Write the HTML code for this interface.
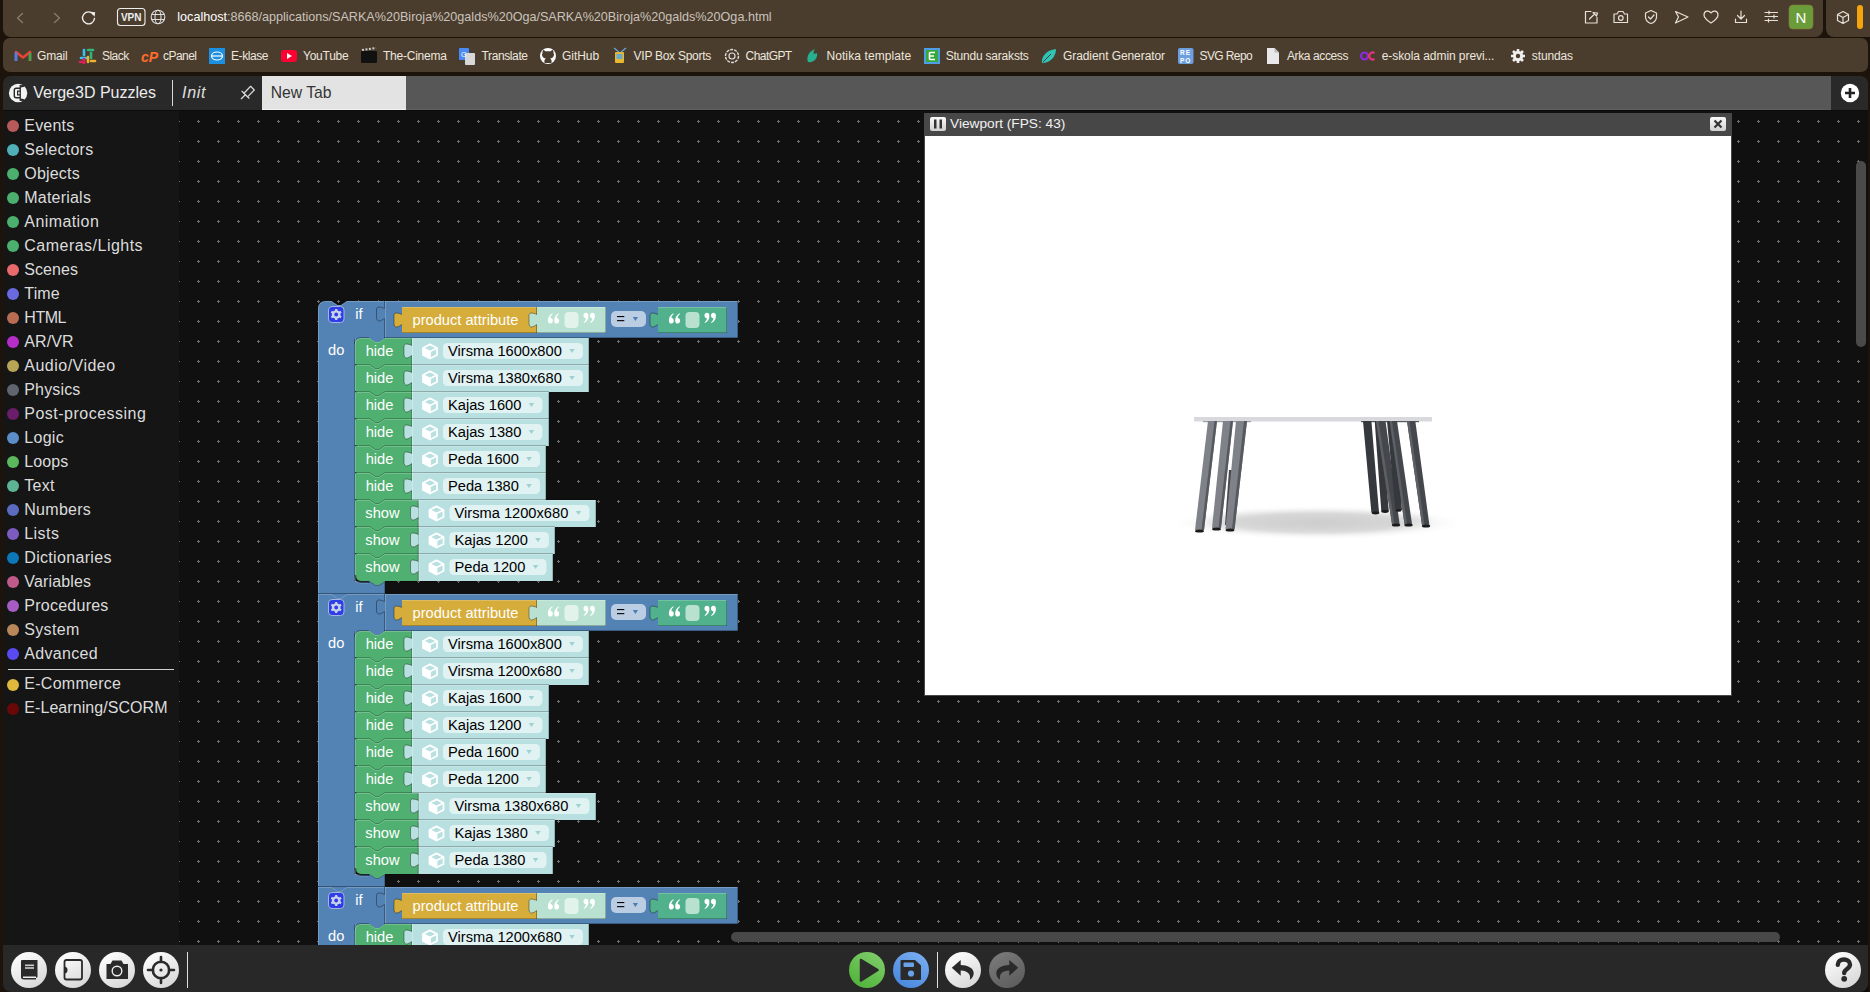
<!DOCTYPE html>
<html><head><meta charset="utf-8"><title>Verge3D Puzzles</title><style>
*{margin:0;padding:0;box-sizing:border-box}
html,body{width:1870px;height:992px;overflow:hidden;background:#1c140b;font-family:"Liberation Sans",sans-serif}
.a{position:absolute}
.t{white-space:nowrap}
svg{position:absolute;overflow:visible}
</style></head><body>

<div class="a" style="left:3px;top:-10px;width:1820px;height:47px;background:#4b3d2e;border-radius:0 0 8px 8px"></div>
<div class="a" style="left:1826px;top:-10px;width:60px;height:47px;background:#4b3d2e;border-radius:0 0 8px 8px"></div>
<div class="a" style="left:3px;top:38px;width:1865px;height:34px;background:#4b3d2e;border-radius:7px"></div>
<svg style="left:0;top:0" width="1870" height="37">
<g fill="none" stroke="#8a7e70" stroke-width="1.2" stroke-linecap="round" stroke-linejoin="round">
<path d="M22.5,13.5 L17.5,18 L22.5,22.5"/>
<path d="M54.5,13.5 L59.5,18 L54.5,22.5"/>
</g>
<g fill="none" stroke="#eee" stroke-width="1.4" stroke-linecap="round">
<path d="M93.5,14.5 A6,6 0 1 0 94.5,18.5"/>
</g>
<path d="M90.5,11.8 L95.2,12.2 L94.6,16.8 Z" fill="#eee"/>
<rect x="117.5" y="8.5" width="27.5" height="17" rx="3" fill="none" stroke="#eee" stroke-width="1.1"/>
<text x="131.2" y="21.2" font-family="Liberation Sans" font-weight="bold" font-size="10" fill="#eee" text-anchor="middle">VPN</text>
<g fill="none" stroke="#ddd" stroke-width="1.1">
<circle cx="158" cy="17" r="6.8"/>
<ellipse cx="158" cy="17" rx="3" ry="6.8"/>
<path d="M151.5,14.5 H164.5 M151.5,19.5 H164.5"/>
</g>
<g fill="none" stroke="#e6e0d8" stroke-width="1.2" stroke-linecap="round" stroke-linejoin="round">
<path d="M1591,11.5 H1585.5 V23 H1597 V17.5"/>
<path d="M1589.5,19 L1594.5,14 M1593,12.5 L1596.5,16 L1597.5,13 Z"/>
<path d="M1614,14 H1617 L1618.5,11.5 H1623 L1624.5,14 H1627.5 V22.5 H1614 Z"/>
<circle cx="1620.8" cy="18" r="2.3"/>
<path d="M1651,10.5 L1645.5,13 V17 C1645.5,20 1648,22.5 1651,23.5 C1654,22.5 1656.5,20 1656.5,17 V13 Z"/>
<path d="M1648.5,17 L1650.5,19 L1654,15"/>
<path d="M1675.5,11.5 L1688,17 L1675.5,23 L1678.5,17 Z"/>
<path d="M1711,13 C1709,10 1704,10.5 1704,15 C1704,18.5 1708,21 1711,23 C1714,21 1718,18.5 1718,15 C1718,10.5 1713,10 1711,13 Z"/>
<path d="M1741,11 V19 M1737.5,15.5 L1741,19 L1744.5,15.5 M1735.5,19 V22.5 H1746.5 V19"/>
<path d="M1765,12.5 H1777.5 M1765,16.5 H1777.5 M1765,20.5 H1777.5"/>
<path d="M1769,11 V14 M1774,15 V18 M1768.5,19 V22"/>
<path d="M1843,11.5 L1848.5,14.5 V20.5 L1843,23.5 L1837.5,20.5 V14.5 Z M1837.5,14.5 L1843,17.5 L1848.5,14.5 M1843,17.5 V23.5"/>
</g>
<rect x="1789" y="5" width="24" height="24" rx="4" fill="#6a9c3a" stroke="#8a7a3a" stroke-width="0.6"/>
<text x="1801" y="22.5" font-family="Liberation Sans" font-size="15" fill="#fff" text-anchor="middle">N</text>
<rect x="1857" y="5" width="6" height="24" rx="3" fill="#f5a50c"/>
</svg>
<div class="a t" style="left:177.3px;top:11.33px;font-size:12.6px;line-height:12.6px;color:#fff;"><span style="color:#fff">localhost</span><span style="color:#c9c3bb">:8668/applications/SARKA%20Biroja%20galds%20Oga/SARKA%20Biroja%20galds%20Oga.html</span></div>
<div class="a t" style="left:37px;top:49.84px;font-size:12px;line-height:12px;color:#ece6de;letter-spacing:-0.187px">Gmail</div>
<div class="a t" style="left:102px;top:49.84px;font-size:12px;line-height:12px;color:#ece6de;letter-spacing:-0.549px">Slack</div>
<div class="a t" style="left:163px;top:49.84px;font-size:12px;line-height:12px;color:#ece6de;letter-spacing:-0.549px">cPanel</div>
<div class="a t" style="left:231px;top:49.84px;font-size:12px;line-height:12px;color:#ece6de;letter-spacing:-0.431px">E-klase</div>
<div class="a t" style="left:303px;top:49.84px;font-size:12px;line-height:12px;color:#ece6de;letter-spacing:-0.237px">YouTube</div>
<div class="a t" style="left:383px;top:49.84px;font-size:12px;line-height:12px;color:#ece6de;letter-spacing:-0.232px">The-Cinema</div>
<div class="a t" style="left:481.6px;top:49.84px;font-size:12px;line-height:12px;color:#ece6de;letter-spacing:-0.397px">Translate</div>
<div class="a t" style="left:562px;top:49.84px;font-size:12px;line-height:12px;color:#ece6de;letter-spacing:-0.058px">GitHub</div>
<div class="a t" style="left:633.6px;top:49.84px;font-size:12px;line-height:12px;color:#ece6de;letter-spacing:-0.268px">VIP Box Sports</div>
<div class="a t" style="left:745.6px;top:49.84px;font-size:12px;line-height:12px;color:#ece6de;letter-spacing:-0.574px">ChatGPT</div>
<div class="a t" style="left:826.4px;top:49.84px;font-size:12px;line-height:12px;color:#ece6de;letter-spacing:0.102px">Notika template</div>
<div class="a t" style="left:945.7px;top:49.84px;font-size:12px;line-height:12px;color:#ece6de;letter-spacing:-0.210px">Stundu saraksts</div>
<div class="a t" style="left:1063px;top:49.84px;font-size:12px;line-height:12px;color:#ece6de;letter-spacing:-0.077px">Gradient Generator</div>
<div class="a t" style="left:1199.6px;top:49.84px;font-size:12px;line-height:12px;color:#ece6de;letter-spacing:-0.620px">SVG Repo</div>
<div class="a t" style="left:1287px;top:49.84px;font-size:12px;line-height:12px;color:#ece6de;letter-spacing:-0.396px">Arka access</div>
<div class="a t" style="left:1381.7px;top:49.84px;font-size:12px;line-height:12px;color:#ece6de;letter-spacing:-0.061px">e-skola admin previ...</div>
<div class="a t" style="left:1531.8px;top:49.84px;font-size:12px;line-height:12px;color:#ece6de;letter-spacing:-0.118px">stundas</div>
<svg style="left:0;top:38" width="1870" height="34">
<g transform="translate(0,-38)">
<path d="M16,61 V52 L23,57.5 L30,52 V61" fill="none" stroke="#ea4335" stroke-width="2.6" stroke-linejoin="round"/>
<path d="M16,52.3 V61" stroke="#4285f4" stroke-width="2.6"/>
<path d="M30,53 V61" stroke="#34a853" stroke-width="2.6"/>
<g stroke-width="2.6" stroke-linecap="round">
<path d="M84,50 V55" stroke="#36c5f0"/><path d="M81,58 H86" stroke="#36c5f0"/>
<path d="M88,50 H93" stroke="#2eb67d"/><path d="M91,53 V58" stroke="#2eb67d"/>
<path d="M88,62 V57" stroke="#ecb22e"/><path d="M91,61 H95" stroke="#ecb22e"/>
<path d="M84,62 H80" stroke="#e01e5a"/><path d="M84,59 V63" stroke="#e01e5a"/>
</g>
<text x="141" y="62" font-family="Liberation Sans" font-weight="bold" font-style="italic" font-size="14" fill="#ff6c2c">cP</text>
<rect x="209" y="48" width="16" height="16" fill="#1c8fe0"/>
<ellipse cx="217" cy="56" rx="5.5" ry="4" fill="none" stroke="#fff" stroke-width="1.2"/><path d="M211.5,56 H222.5" stroke="#fff" stroke-width="1.2"/>
<rect x="281" y="50" width="16" height="12" rx="3" fill="#ff0033"/><path d="M287,53 L292,56 L287,59 Z" fill="#fff"/>
<rect x="361" y="51" width="16" height="12" rx="1" fill="#111"/><path d="M362,50 L376,48" stroke="#ccc" stroke-width="2" stroke-dasharray="2,1.5"/>
<rect x="459" y="48" width="10" height="12" rx="1" fill="#4a8af4"/><rect x="465" y="53" width="10" height="12" rx="1" fill="#d8d8d8"/>
<text x="461" y="57" font-size="7" font-family="Liberation Sans" fill="#fff">G</text>
<circle cx="548" cy="56" r="8" fill="#fff"/><path d="M544.5,63 C544,60 545,59 546,58.5 C542,58 541.5,55 542.5,53 C542.5,52 542.5,51 543,50 C544,50 545,51 546,51.5 C547.3,51.2 548.7,51.2 550,51.5 C551,51 552,50 553,50 C553.5,51 553.5,52 553.5,53 C554.5,55 554,58 550,58.5 C551,59 552,60 551.5,63 Z" fill="#4b3d2e"/>
<rect x="615" y="52" width="9" height="11" rx="1" fill="#e8b830"/><rect x="616.5" y="54" width="6" height="5" fill="#6ac"/><path d="M614,48 L619,52 M626,48 L621,52" stroke="#6ad" stroke-width="1.2"/>
<circle cx="732" cy="56" r="6.5" fill="none" stroke="#ddd" stroke-width="1.4" stroke-dasharray="3,1"/>
<circle cx="732" cy="56" r="3" fill="none" stroke="#ddd" stroke-width="1.2"/>
<path d="M808,62 C806,57 809,51 815,49 C812,53 814,55 817,53 C818,58 814,63 808,62 Z" fill="#26b090"/>
<rect x="924" y="48" width="16" height="16" fill="#4e9de8"/><rect x="926" y="50" width="12" height="12" fill="#36a83a"/><path d="M929.5,52.5 H935 M929.5,56 H934 M929.5,59.5 H935 M929.5,52.5 V59.5" stroke="#fff" stroke-width="1.6"/>
<path d="M1042,63 C1041,57 1046,50 1056,49 C1056,57 1050,63 1042,63 Z" fill="#2ec4b6"/><path d="M1043,62 L1051,54" stroke="#4b3d2e" stroke-width="1"/>
<rect x="1178" y="48" width="15.5" height="16" rx="2" fill="#6d9fe0"/>
<text x="1180" y="55" font-size="6.5" font-family="Liberation Sans" font-weight="bold" fill="#fff" letter-spacing="1">RE</text>
<text x="1180" y="62.5" font-size="6.5" font-family="Liberation Sans" font-weight="bold" fill="#fff" letter-spacing="1">PO</text>
<path d="M1267,48 H1274.5 L1279,52.5 V64 H1267 Z" fill="#e8e8ea"/><path d="M1274.5,48 V52.5 H1279" fill="#bbb"/>
<path d="M1368,56 A3.5,3.5 0 1 0 1368,56.1" fill="none"/>
<circle cx="1364.5" cy="56" r="3.5" fill="none" stroke="#8a2be2" stroke-width="2.2"/>
<path d="M1374.5,53 A3.5,3.5 0 1 0 1374.5,59" fill="none" stroke="#e0357a" stroke-width="2.2"/>
<g transform="translate(1518,56)" fill="#eee">
<circle r="5.2"/><g stroke="#eee" stroke-width="2.6"><path d="M0,-7 V7 M-7,0 H7 M-5,-5 L5,5 M5,-5 L-5,5"/></g>
<circle r="2.2" fill="#4b3d2e"/>
</g>
</g></svg>
<div class="a" style="left:3px;top:76px;width:1865px;height:916px;background:#0b0b0b;border-radius:7px 7px 0 8px;overflow:hidden"></div>
<div class="a" style="left:3px;top:76px;width:1865px;height:34px;background:#292929;border-radius:7px 7px 0 0"></div>
<div class="a" style="left:262px;top:76px;width:144px;height:34px;background:#e3e3e3;border-bottom:1px solid #f4f4f4"></div>
<div class="a" style="left:406px;top:76px;width:1425px;height:34px;background:#575757;border-bottom:1px solid #5f5f5f"></div>
<div class="a t" style="left:33.2px;top:84.76px;font-size:16px;line-height:16px;color:#ececec;">Verge3D Puzzles</div>
<div class="a" style="left:172px;top:80px;width:1px;height:26px;background:#d8d8d8"></div>
<div class="a t" style="left:182px;top:84.76px;font-size:16px;line-height:16px;color:#e0e0e0;font-style:italic;letter-spacing:0.7px">Init</div>
<div class="a t" style="left:270.7px;top:85.01px;font-size:15.7px;line-height:15.7px;color:#333;">New Tab</div>
<svg style="left:0;top:76" width="1870" height="34"><g transform="translate(0,-76)">
<circle cx="18.1" cy="93" r="9.2" fill="#f2f2f2"/>
<rect x="19.6" y="85" width="1.3" height="16" fill="#292929"/>
<path d="M20.2,88.3 H16.2 Q14.3,88.3 14.3,90.3 V95.7 Q14.3,97.7 16.2,97.7 H20.2" fill="none" stroke="#292929" stroke-width="1.4"/>
<path d="M20.2,91.2 H17.6 V94.8 H20.2" fill="none" stroke="#292929" stroke-width="1.2"/>
<path d="M20.9,85 L24.5,85.2 L24.5,86.8 L20.9,87.6 Z" fill="#292929"/>
<path d="M20.9,101 L24.5,100.8 L24.5,99.2 L20.9,98.4 Z" fill="#292929"/>
<g fill="none" stroke="#d8d8d8" stroke-width="1.25" stroke-linejoin="round" stroke-linecap="round">
<path d="M242,91.3 L249,98.2"/>
<path d="M244,93.2 L250.6,86.3 L254.3,90 L247.8,96.6"/>
<path d="M245.3,94.7 L241.3,98.7"/>
</g>
<circle cx="1850" cy="93" r="9.2" fill="#fff"/>
<path d="M1850,88 V98 M1845,93 H1855" stroke="#222" stroke-width="2.6"/>
</g></svg>
<div class="a" style="left:3px;top:111px;width:176px;height:834px;background:#151515"></div>
<div class="a" style="left:7px;top:120.2px;width:12px;height:12px;border-radius:6px;background:#b85a5a"></div>
<div class="a t" style="left:24.3px;top:117.86px;font-size:16px;line-height:16px;color:#dcdcdc;letter-spacing:0.198px">Events</div>
<div class="a" style="left:7px;top:144.2px;width:12px;height:12px;border-radius:6px;background:#4fb0b8"></div>
<div class="a t" style="left:24.3px;top:141.86px;font-size:16px;line-height:16px;color:#dcdcdc;letter-spacing:0.278px">Selectors</div>
<div class="a" style="left:7px;top:168.2px;width:12px;height:12px;border-radius:6px;background:#4caf6e"></div>
<div class="a t" style="left:24.3px;top:165.86px;font-size:16px;line-height:16px;color:#dcdcdc;letter-spacing:0.194px">Objects</div>
<div class="a" style="left:7px;top:192.2px;width:12px;height:12px;border-radius:6px;background:#4caf6e"></div>
<div class="a t" style="left:24.3px;top:189.86px;font-size:16px;line-height:16px;color:#dcdcdc;letter-spacing:0.210px">Materials</div>
<div class="a" style="left:7px;top:216.2px;width:12px;height:12px;border-radius:6px;background:#4caf6e"></div>
<div class="a t" style="left:24.3px;top:213.86px;font-size:16px;line-height:16px;color:#dcdcdc;letter-spacing:0.417px">Animation</div>
<div class="a" style="left:7px;top:240.2px;width:12px;height:12px;border-radius:6px;background:#4caf6e"></div>
<div class="a t" style="left:24.3px;top:237.86px;font-size:16px;line-height:16px;color:#dcdcdc;letter-spacing:0.482px">Cameras/Lights</div>
<div class="a" style="left:7px;top:264.2px;width:12px;height:12px;border-radius:6px;background:#e86a6a"></div>
<div class="a t" style="left:24.3px;top:261.86px;font-size:16px;line-height:16px;color:#dcdcdc;letter-spacing:0.072px">Scenes</div>
<div class="a" style="left:7px;top:288.2px;width:12px;height:12px;border-radius:6px;background:#6a6ae0"></div>
<div class="a t" style="left:24.3px;top:285.86px;font-size:16px;line-height:16px;color:#dcdcdc;letter-spacing:0.160px">Time</div>
<div class="a" style="left:7px;top:312.2px;width:12px;height:12px;border-radius:6px;background:#b86d52"></div>
<div class="a t" style="left:24.3px;top:309.86px;font-size:16px;line-height:16px;color:#dcdcdc;letter-spacing:-0.464px">HTML</div>
<div class="a" style="left:7px;top:336.2px;width:12px;height:12px;border-radius:6px;background:#b52ec8"></div>
<div class="a t" style="left:24.3px;top:333.86px;font-size:16px;line-height:16px;color:#dcdcdc;letter-spacing:0.060px">AR/VR</div>
<div class="a" style="left:7px;top:360.2px;width:12px;height:12px;border-radius:6px;background:#b8a455"></div>
<div class="a t" style="left:24.3px;top:357.86px;font-size:16px;line-height:16px;color:#dcdcdc;letter-spacing:0.482px">Audio/Video</div>
<div class="a" style="left:7px;top:384.2px;width:12px;height:12px;border-radius:6px;background:#60646e"></div>
<div class="a t" style="left:24.3px;top:381.86px;font-size:16px;line-height:16px;color:#dcdcdc;letter-spacing:0.154px">Physics</div>
<div class="a" style="left:7px;top:408.2px;width:12px;height:12px;border-radius:6px;background:#6a1e6a"></div>
<div class="a t" style="left:24.3px;top:405.86px;font-size:16px;line-height:16px;color:#dcdcdc;letter-spacing:0.492px">Post-processing</div>
<div class="a" style="left:7px;top:432.2px;width:12px;height:12px;border-radius:6px;background:#5b8ec8"></div>
<div class="a t" style="left:24.3px;top:429.86px;font-size:16px;line-height:16px;color:#dcdcdc;letter-spacing:0.270px">Logic</div>
<div class="a" style="left:7px;top:456.2px;width:12px;height:12px;border-radius:6px;background:#5cb85c"></div>
<div class="a t" style="left:24.3px;top:453.86px;font-size:16px;line-height:16px;color:#dcdcdc;letter-spacing:0.101px">Loops</div>
<div class="a" style="left:7px;top:480.2px;width:12px;height:12px;border-radius:6px;background:#5cb494"></div>
<div class="a t" style="left:24.3px;top:477.86px;font-size:16px;line-height:16px;color:#dcdcdc;letter-spacing:0.289px">Text</div>
<div class="a" style="left:7px;top:504.2px;width:12px;height:12px;border-radius:6px;background:#5b6cc0"></div>
<div class="a t" style="left:24.3px;top:501.86px;font-size:16px;line-height:16px;color:#dcdcdc;letter-spacing:0.270px">Numbers</div>
<div class="a" style="left:7px;top:528.2px;width:12px;height:12px;border-radius:6px;background:#7d5cc2"></div>
<div class="a t" style="left:24.3px;top:525.86px;font-size:16px;line-height:16px;color:#dcdcdc;letter-spacing:0.420px">Lists</div>
<div class="a" style="left:7px;top:552.2px;width:12px;height:12px;border-radius:6px;background:#0c78b8"></div>
<div class="a t" style="left:24.3px;top:549.86px;font-size:16px;line-height:16px;color:#dcdcdc;letter-spacing:0.318px">Dictionaries</div>
<div class="a" style="left:7px;top:576.2px;width:12px;height:12px;border-radius:6px;background:#c05a8a"></div>
<div class="a t" style="left:24.3px;top:573.86px;font-size:16px;line-height:16px;color:#dcdcdc;letter-spacing:0.143px">Variables</div>
<div class="a" style="left:7px;top:600.2px;width:12px;height:12px;border-radius:6px;background:#a65cc2"></div>
<div class="a t" style="left:24.3px;top:597.86px;font-size:16px;line-height:16px;color:#dcdcdc;letter-spacing:0.248px">Procedures</div>
<div class="a" style="left:7px;top:624.2px;width:12px;height:12px;border-radius:6px;background:#b8875a"></div>
<div class="a t" style="left:24.3px;top:621.86px;font-size:16px;line-height:16px;color:#dcdcdc;letter-spacing:0.326px">System</div>
<div class="a" style="left:7px;top:648.2px;width:12px;height:12px;border-radius:6px;background:#5a4af2"></div>
<div class="a t" style="left:24.3px;top:645.86px;font-size:16px;line-height:16px;color:#dcdcdc;letter-spacing:0.317px">Advanced</div>
<div class="a" style="left:8px;top:669px;width:166px;height:1px;background:#d0d0d0"></div>
<div class="a" style="left:7px;top:678.5px;width:12px;height:12px;border-radius:6px;background:#e0b83c"></div>
<div class="a t" style="left:24.3px;top:676.16px;font-size:16px;line-height:16px;color:#dcdcdc;letter-spacing:0.276px">E-Commerce</div>
<div class="a" style="left:7px;top:702.5px;width:12px;height:12px;border-radius:6px;background:#6a0808"></div>
<div class="a t" style="left:24.3px;top:700.16px;font-size:16px;line-height:16px;color:#dcdcdc;letter-spacing:0.064px">E-Learning/SCORM</div>
<div class="a" style="left:179px;top:111px;width:1689px;height:834px;background:#101010"></div>
<svg style="left:179px;top:113px" width="1689" height="832"><defs><pattern id="grid" patternUnits="userSpaceOnUse" x="188" y="111" width="20" height="20"><rect x="9" y="10" width="3" height="1" fill="#6e6e6e"/><rect x="10" y="9" width="1" height="3" fill="#6e6e6e"/></pattern></defs><g transform="translate(-179,-113)"><rect x="179" y="113" width="1689" height="832" fill="url(#grid)"/><path d="M318,309 Q318,301 326,301 H331.5 l6,4 h3.5 l6,-4 H384 V338 H355 V581 H385 V594 H318 Z" fill="#5382b4"/><path d="M318.5,309 Q318.5,301.5 326,301.5 H331.5 l6,4 h3.5 l6,-4 H384" fill="none" stroke="rgba(255,255,255,0.2)" stroke-width="1"/><rect x="318" y="309" width="1" height="284" fill="rgba(255,255,255,0.2)"/><rect x="354" y="338" width="1" height="243" fill="rgba(0,0,0,0.24)"/><path d="M369,338 l6.5,4.2 h3.5 l6.5,-4.2 Z" fill="#5382b4"/><rect x="318" y="593" width="67" height="1" fill="rgba(0,0,0,0.35)"/><rect x="384" y="581" width="1" height="12" fill="rgba(0,0,0,0.24)"/><rect x="355" y="581" width="30" height="1" fill="rgba(255,255,255,0.2)"/><rect x="384" y="301" width="354" height="37" fill="#5382b4"/><rect x="385" y="301" width="353" height="1" fill="rgba(255,255,255,0.2)"/><rect x="385" y="301" width="1" height="37" fill="rgba(255,255,255,0.2)"/><rect x="384" y="337" width="354" height="1" fill="rgba(0,0,0,0.28)"/><rect x="737" y="301" width="1" height="37" fill="rgba(0,0,0,0.28)"/><rect x="384" y="301" width="1" height="7.5" fill="rgba(0,0,0,0.3)"/><rect x="384" y="318.5" width="1" height="19.5" fill="rgba(0,0,0,0.3)"/><path d="M384.5,308.5 C382.5,307.5 380.5,307 378.5,307 C377.0,307 376.5,308.5 376.5,310 V317.5 C376.5,319.5 377.5,321 379.0,321 C381.0,321 382.5,319.5 384.5,318.5 Z" fill="#5382b4"/><path d="M384.5,308.5 C382.5,307.5 380.5,307 378.5,307 C377.0,307 376.5,308.5 376.5,310 V317.5 C376.5,319.5 377.5,321 379.0,321 C381.0,321 382.5,319.5 384.5,318.5" fill="none" stroke="rgba(0,0,0,0.4)" stroke-width="0.9"/><rect x="328.5" y="306.5" width="15.5" height="16" rx="3.5" fill="#2c3ee8" stroke="#a6b5de" stroke-width="1"/><g transform="translate(336.2,314.5)"><circle r="4.3" fill="#c9d2ea"/><g stroke="#c9d2ea" stroke-width="2.2"><path d="M0,-5.6 V5.6 M-4.9,-2.8 L4.9,2.8 M-4.9,2.8 L4.9,-2.8"/></g><circle r="1.9" fill="#2c3ee8"/></g><text x="355.3" y="319" font-family="Liberation Sans" font-size="14.67" fill="#fff">if</text><text x="328" y="354.5" font-family="Liberation Sans" font-size="14.67" fill="#fff">do</text><rect x="402" y="307" width="136" height="26" fill="#d6ac3a"/><path d="M402,314.5 C400,313.5 398,313 396,313 C394.5,313 394,314.5 394,316 V323.5 C394,325.5 395,327 396.5,327 C398.5,327 400,325.5 402,324.5 Z" fill="#d6ac3a"/><path d="M402,314.5 C400,313.5 398,313 396,313 C394.5,313 394,314.5 394,316 V323.5 C394,325.5 395,327 396.5,327 C398.5,327 400,325.5 402,324.5" fill="none" stroke="rgba(0,0,0,0.4)" stroke-width="0.9"/><rect x="402" y="307" width="135" height="1" fill="rgba(255,255,255,0.2)"/><rect x="402" y="332" width="135" height="1" fill="rgba(0,0,0,0.24)"/><rect x="536" y="307" width="1" height="26" fill="rgba(0,0,0,0.3)"/><text x="412.5" y="325.3" font-family="Liberation Sans" font-size="14.67" fill="#fff">product attribute</text><rect x="537" y="307" width="69" height="26" fill="#b8e1d1"/><path d="M537,314.5 C535,313.5 533,313 531,313 C529.5,313 529,314.5 529,316 V323.5 C529,325.5 530,327 531.5,327 C533.5,327 535,325.5 537,324.5 Z" fill="#b8e1d1"/><path d="M537,314.5 C535,313.5 533,313 531,313 C529.5,313 529,314.5 529,316 V323.5 C529,325.5 530,327 531.5,327 C533.5,327 535,325.5 537,324.5" fill="none" stroke="rgba(0,0,0,0.4)" stroke-width="0.9"/><rect x="537" y="307" width="69" height="1" fill="rgba(255,255,255,0.2)"/><rect x="537" y="332" width="69" height="1" fill="rgba(0,0,0,0.24)"/><rect x="605" y="307" width="1" height="26" fill="rgba(0,0,0,0.24)"/><rect x="564.5" y="312" width="14" height="16" rx="4" fill="#e1f3eb"/><path d="M547.9000000000001,320.6 C547.7,317.5 549.3000000000001,314.8 552.3000000000001,313.2 L552.7,314.1 C551.1,315.4 550.3000000000001,316.8 550.5,318 C551.9000000000001,318 552.8000000000001,319 552.8000000000001,320.5 A2.5,2.5 0 1 1 547.9000000000001,320.6 Z" fill="#fff"/><path d="M554.2,320.6 C554.0,317.5 555.6,314.8 558.6,313.2 L559.0,314.1 C557.4,315.4 556.6,316.8 556.8,318 C558.2,318 559.1,319 559.1,320.5 A2.5,2.5 0 1 1 554.2,320.6 Z" fill="#fff"/><g transform="rotate(180 589.3 318.3)"><path d="M583.7,320.90000000000003 C583.5,317.8 585.1,315.1 588.1,313.5 L588.5,314.40000000000003 C586.9,315.7 586.1,317.1 586.3,318.3 C587.7,318.3 588.6,319.3 588.6,320.8 A2.5,2.5 0 1 1 583.7,320.90000000000003 Z" fill="#fff"/><path d="M590.2,320.90000000000003 C590.0,317.8 591.6,315.1 594.6,313.5 L595.0,314.40000000000003 C593.4,315.7 592.6,317.1 592.8,318.3 C594.2,318.3 595.1,319.3 595.1,320.8 A2.5,2.5 0 1 1 590.2,320.90000000000003 Z" fill="#fff"/></g><rect x="611" y="311" width="35" height="16" rx="5" fill="#bacde2"/><rect x="617" y="316" width="7.3" height="1.1" fill="#000"/><rect x="617" y="320.1" width="7.3" height="1.1" fill="#000"/><path d="M632.8,317 H638 L635.4,321 Z" fill="#4a7db3"/><rect x="658" y="307" width="69" height="26" fill="#52b18d"/><path d="M658,314.5 C656,313.5 654,313 652,313 C650.5,313 650,314.5 650,316 V323.5 C650,325.5 651,327 652.5,327 C654.5,327 656,325.5 658,324.5 Z" fill="#52b18d"/><path d="M658,314.5 C656,313.5 654,313 652,313 C650.5,313 650,314.5 650,316 V323.5 C650,325.5 651,327 652.5,327 C654.5,327 656,325.5 658,324.5" fill="none" stroke="rgba(0,0,0,0.4)" stroke-width="0.9"/><rect x="658" y="307" width="69" height="1" fill="rgba(255,255,255,0.2)"/><rect x="658" y="332" width="69" height="1" fill="rgba(0,0,0,0.24)"/><rect x="726" y="307" width="1" height="26" fill="rgba(0,0,0,0.24)"/><rect x="685.5" y="312" width="14" height="16" rx="4" fill="#b8e1d0"/><path d="M668.9000000000001,320.6 C668.7,317.5 670.3000000000001,314.8 673.3000000000001,313.2 L673.7,314.1 C672.1,315.4 671.3000000000001,316.8 671.5,318 C672.9000000000001,318 673.8000000000001,319 673.8000000000001,320.5 A2.5,2.5 0 1 1 668.9000000000001,320.6 Z" fill="#fff"/><path d="M675.2,320.6 C675.0,317.5 676.6,314.8 679.6,313.2 L680.0,314.1 C678.4,315.4 677.6,316.8 677.8,318 C679.2,318 680.1,319 680.1,320.5 A2.5,2.5 0 1 1 675.2,320.6 Z" fill="#fff"/><g transform="rotate(180 710.3 318.3)"><path d="M704.7,320.90000000000003 C704.5,317.8 706.1,315.1 709.1,313.5 L709.5,314.40000000000003 C707.9,315.7 707.1,317.1 707.3,318.3 C708.7,318.3 709.6,319.3 709.6,320.8 A2.5,2.5 0 1 1 704.7,320.90000000000003 Z" fill="#fff"/><path d="M711.2,320.90000000000003 C711.0,317.8 712.6,315.1 715.6,313.5 L716.0,314.40000000000003 C714.4,315.7 713.6,317.1 713.8,318.3 C715.2,318.3 716.1,319.3 716.1,320.8 A2.5,2.5 0 1 1 711.2,320.90000000000003 Z" fill="#fff"/></g><rect x="355" y="338" width="8" height="8" fill="#5382b4"/><path d="M355,344 Q355,338 361,338 H369.5 l6,4 h3.5 l6,-4 H412 V365 H355 Z" fill="#50b071"/><path d="M355.5,344 Q355.5,338.5 361,338.5 H369.5 l6,4 h3.5 l6,-4 H412" fill="none" stroke="rgba(255,255,255,0.2)" stroke-width="1"/><path d="M354.5,344 Q354.5,337.5 361,337.5 H369" fill="none" stroke="rgba(0,0,0,0.3)" stroke-width="1"/><rect x="412" y="338" width="177" height="27" fill="#b8e0e0"/><rect x="412" y="338" width="1" height="27" fill="rgba(255,255,255,0.3)"/><rect x="588" y="338" width="1" height="27" fill="rgba(0,0,0,0.2)"/><rect x="411" y="338" width="1" height="27" fill="rgba(0,0,0,0.2)"/><rect x="355" y="338" width="1" height="27" fill="rgba(255,255,255,0.2)"/><path d="M412,345.5 C410,344.5 408,344 406,344 C404.5,344 404,345.5 404,347 V354.5 C404,356.5 405,358 406.5,358 C408.5,358 410,356.5 412,355.5 Z" fill="#b8e0e0"/><path d="M412,345.5 C410,344.5 408,344 406,344 C404.5,344 404,345.5 404,347 V354.5 C404,356.5 405,358 406.5,358 C408.5,358 410,356.5 412,355.5" fill="none" stroke="rgba(0,0,0,0.4)" stroke-width="0.9"/><text x="365.7" y="355.8" font-family="Liberation Sans" font-size="14.67" fill="#fff">hide</text><g transform="translate(422,343.5)"><path d="M1,4.5 L8,8 V15 L1,11.5 Z" fill="#fff"/><g fill="none" stroke="#fff" stroke-width="1.8" stroke-linejoin="round"><path d="M8,0.9 L15,4.5 V11.5 L8,15 L1,11.5 V4.5 Z"/><path d="M1,4.5 L8,8 L15,4.5 M8,8 V15"/></g></g><rect x="443" y="343" width="139.9" height="16" rx="4.5" fill="#e1f2f2"/><text x="448" y="355.9" font-family="Liberation Sans" font-size="14.67" fill="#000">Virsma 1600x800</text><path d="M569.2,349 H574.7 L572.0,353 Z" fill="#9ed1d1"/><rect x="355" y="365" width="57" height="27" fill="#50b071"/><rect x="412" y="365" width="177" height="27" fill="#b8e0e0"/><rect x="412" y="365" width="1" height="27" fill="rgba(255,255,255,0.3)"/><rect x="588" y="365" width="1" height="27" fill="rgba(0,0,0,0.2)"/><rect x="411" y="365" width="1" height="27" fill="rgba(0,0,0,0.2)"/><rect x="355" y="365" width="1" height="27" fill="rgba(255,255,255,0.2)"/><path d="M412,372.5 C410,371.5 408,371 406,371 C404.5,371 404,372.5 404,374 V381.5 C404,383.5 405,385 406.5,385 C408.5,385 410,383.5 412,382.5 Z" fill="#b8e0e0"/><path d="M412,372.5 C410,371.5 408,371 406,371 C404.5,371 404,372.5 404,374 V381.5 C404,383.5 405,385 406.5,385 C408.5,385 410,383.5 412,382.5" fill="none" stroke="rgba(0,0,0,0.4)" stroke-width="0.9"/><path d="M355,364.5 H369.5 l6,4 h3.5 l6,-4 H589" fill="none" stroke="rgba(0,0,0,0.24)" stroke-width="1"/><path d="M357,365.5 H369.5 l6,4 h3.5 l6,-4 H589" fill="none" stroke="rgba(255,255,255,0.2)" stroke-width="1"/><rect x="355" y="364" width="1.2" height="1.2" fill="rgba(0,0,0,0.6)"/><text x="365.7" y="382.8" font-family="Liberation Sans" font-size="14.67" fill="#fff">hide</text><g transform="translate(422,370.5)"><path d="M1,4.5 L8,8 V15 L1,11.5 Z" fill="#fff"/><g fill="none" stroke="#fff" stroke-width="1.8" stroke-linejoin="round"><path d="M8,0.9 L15,4.5 V11.5 L8,15 L1,11.5 V4.5 Z"/><path d="M1,4.5 L8,8 L15,4.5 M8,8 V15"/></g></g><rect x="443" y="370" width="139.9" height="16" rx="4.5" fill="#e1f2f2"/><text x="448" y="382.9" font-family="Liberation Sans" font-size="14.67" fill="#000">Virsma 1380x680</text><path d="M569.2,376 H574.7 L572.0,380 Z" fill="#9ed1d1"/><rect x="355" y="392" width="57" height="27" fill="#50b071"/><rect x="412" y="392" width="137" height="27" fill="#b8e0e0"/><rect x="412" y="392" width="1" height="27" fill="rgba(255,255,255,0.3)"/><rect x="548" y="392" width="1" height="27" fill="rgba(0,0,0,0.2)"/><rect x="411" y="392" width="1" height="27" fill="rgba(0,0,0,0.2)"/><rect x="355" y="392" width="1" height="27" fill="rgba(255,255,255,0.2)"/><path d="M412,399.5 C410,398.5 408,398 406,398 C404.5,398 404,399.5 404,401 V408.5 C404,410.5 405,412 406.5,412 C408.5,412 410,410.5 412,409.5 Z" fill="#b8e0e0"/><path d="M412,399.5 C410,398.5 408,398 406,398 C404.5,398 404,399.5 404,401 V408.5 C404,410.5 405,412 406.5,412 C408.5,412 410,410.5 412,409.5" fill="none" stroke="rgba(0,0,0,0.4)" stroke-width="0.9"/><path d="M355,391.5 H369.5 l6,4 h3.5 l6,-4 H549" fill="none" stroke="rgba(0,0,0,0.24)" stroke-width="1"/><path d="M357,392.5 H369.5 l6,4 h3.5 l6,-4 H549" fill="none" stroke="rgba(255,255,255,0.2)" stroke-width="1"/><rect x="355" y="391" width="1.2" height="1.2" fill="rgba(0,0,0,0.6)"/><text x="365.7" y="409.8" font-family="Liberation Sans" font-size="14.67" fill="#fff">hide</text><g transform="translate(422,397.5)"><path d="M1,4.5 L8,8 V15 L1,11.5 Z" fill="#fff"/><g fill="none" stroke="#fff" stroke-width="1.8" stroke-linejoin="round"><path d="M8,0.9 L15,4.5 V11.5 L8,15 L1,11.5 V4.5 Z"/><path d="M1,4.5 L8,8 L15,4.5 M8,8 V15"/></g></g><rect x="443" y="397" width="99.4" height="16" rx="4.5" fill="#e1f2f2"/><text x="448" y="409.9" font-family="Liberation Sans" font-size="14.67" fill="#000">Kajas 1600</text><path d="M528.7,403 H534.2 L531.5,407 Z" fill="#9ed1d1"/><rect x="355" y="419" width="57" height="27" fill="#50b071"/><rect x="412" y="419" width="137" height="27" fill="#b8e0e0"/><rect x="412" y="419" width="1" height="27" fill="rgba(255,255,255,0.3)"/><rect x="548" y="419" width="1" height="27" fill="rgba(0,0,0,0.2)"/><rect x="411" y="419" width="1" height="27" fill="rgba(0,0,0,0.2)"/><rect x="355" y="419" width="1" height="27" fill="rgba(255,255,255,0.2)"/><path d="M412,426.5 C410,425.5 408,425 406,425 C404.5,425 404,426.5 404,428 V435.5 C404,437.5 405,439 406.5,439 C408.5,439 410,437.5 412,436.5 Z" fill="#b8e0e0"/><path d="M412,426.5 C410,425.5 408,425 406,425 C404.5,425 404,426.5 404,428 V435.5 C404,437.5 405,439 406.5,439 C408.5,439 410,437.5 412,436.5" fill="none" stroke="rgba(0,0,0,0.4)" stroke-width="0.9"/><path d="M355,418.5 H369.5 l6,4 h3.5 l6,-4 H549" fill="none" stroke="rgba(0,0,0,0.24)" stroke-width="1"/><path d="M357,419.5 H369.5 l6,4 h3.5 l6,-4 H549" fill="none" stroke="rgba(255,255,255,0.2)" stroke-width="1"/><rect x="355" y="418" width="1.2" height="1.2" fill="rgba(0,0,0,0.6)"/><text x="365.7" y="436.8" font-family="Liberation Sans" font-size="14.67" fill="#fff">hide</text><g transform="translate(422,424.5)"><path d="M1,4.5 L8,8 V15 L1,11.5 Z" fill="#fff"/><g fill="none" stroke="#fff" stroke-width="1.8" stroke-linejoin="round"><path d="M8,0.9 L15,4.5 V11.5 L8,15 L1,11.5 V4.5 Z"/><path d="M1,4.5 L8,8 L15,4.5 M8,8 V15"/></g></g><rect x="443" y="424" width="99.4" height="16" rx="4.5" fill="#e1f2f2"/><text x="448" y="436.9" font-family="Liberation Sans" font-size="14.67" fill="#000">Kajas 1380</text><path d="M528.7,430 H534.2 L531.5,434 Z" fill="#9ed1d1"/><rect x="355" y="446" width="57" height="27" fill="#50b071"/><rect x="412" y="446" width="134" height="27" fill="#b8e0e0"/><rect x="412" y="446" width="1" height="27" fill="rgba(255,255,255,0.3)"/><rect x="545" y="446" width="1" height="27" fill="rgba(0,0,0,0.2)"/><rect x="411" y="446" width="1" height="27" fill="rgba(0,0,0,0.2)"/><rect x="355" y="446" width="1" height="27" fill="rgba(255,255,255,0.2)"/><path d="M412,453.5 C410,452.5 408,452 406,452 C404.5,452 404,453.5 404,455 V462.5 C404,464.5 405,466 406.5,466 C408.5,466 410,464.5 412,463.5 Z" fill="#b8e0e0"/><path d="M412,453.5 C410,452.5 408,452 406,452 C404.5,452 404,453.5 404,455 V462.5 C404,464.5 405,466 406.5,466 C408.5,466 410,464.5 412,463.5" fill="none" stroke="rgba(0,0,0,0.4)" stroke-width="0.9"/><path d="M355,445.5 H369.5 l6,4 h3.5 l6,-4 H546" fill="none" stroke="rgba(0,0,0,0.24)" stroke-width="1"/><path d="M357,446.5 H369.5 l6,4 h3.5 l6,-4 H546" fill="none" stroke="rgba(255,255,255,0.2)" stroke-width="1"/><rect x="355" y="445" width="1.2" height="1.2" fill="rgba(0,0,0,0.6)"/><text x="365.7" y="463.8" font-family="Liberation Sans" font-size="14.67" fill="#fff">hide</text><g transform="translate(422,451.5)"><path d="M1,4.5 L8,8 V15 L1,11.5 Z" fill="#fff"/><g fill="none" stroke="#fff" stroke-width="1.8" stroke-linejoin="round"><path d="M8,0.9 L15,4.5 V11.5 L8,15 L1,11.5 V4.5 Z"/><path d="M1,4.5 L8,8 L15,4.5 M8,8 V15"/></g></g><rect x="443" y="451" width="97.0" height="16" rx="4.5" fill="#e1f2f2"/><text x="448" y="463.9" font-family="Liberation Sans" font-size="14.67" fill="#000">Peda 1600</text><path d="M526.3,457 H531.8 L529.0,461 Z" fill="#9ed1d1"/><rect x="355" y="473" width="57" height="27" fill="#50b071"/><rect x="412" y="473" width="134" height="27" fill="#b8e0e0"/><rect x="412" y="473" width="1" height="27" fill="rgba(255,255,255,0.3)"/><rect x="545" y="473" width="1" height="27" fill="rgba(0,0,0,0.2)"/><rect x="411" y="473" width="1" height="27" fill="rgba(0,0,0,0.2)"/><rect x="355" y="473" width="1" height="27" fill="rgba(255,255,255,0.2)"/><path d="M412,480.5 C410,479.5 408,479 406,479 C404.5,479 404,480.5 404,482 V489.5 C404,491.5 405,493 406.5,493 C408.5,493 410,491.5 412,490.5 Z" fill="#b8e0e0"/><path d="M412,480.5 C410,479.5 408,479 406,479 C404.5,479 404,480.5 404,482 V489.5 C404,491.5 405,493 406.5,493 C408.5,493 410,491.5 412,490.5" fill="none" stroke="rgba(0,0,0,0.4)" stroke-width="0.9"/><path d="M355,472.5 H369.5 l6,4 h3.5 l6,-4 H546" fill="none" stroke="rgba(0,0,0,0.24)" stroke-width="1"/><path d="M357,473.5 H369.5 l6,4 h3.5 l6,-4 H546" fill="none" stroke="rgba(255,255,255,0.2)" stroke-width="1"/><rect x="355" y="472" width="1.2" height="1.2" fill="rgba(0,0,0,0.6)"/><text x="365.7" y="490.8" font-family="Liberation Sans" font-size="14.67" fill="#fff">hide</text><g transform="translate(422,478.5)"><path d="M1,4.5 L8,8 V15 L1,11.5 Z" fill="#fff"/><g fill="none" stroke="#fff" stroke-width="1.8" stroke-linejoin="round"><path d="M8,0.9 L15,4.5 V11.5 L8,15 L1,11.5 V4.5 Z"/><path d="M1,4.5 L8,8 L15,4.5 M8,8 V15"/></g></g><rect x="443" y="478" width="97.0" height="16" rx="4.5" fill="#e1f2f2"/><text x="448" y="490.9" font-family="Liberation Sans" font-size="14.67" fill="#000">Peda 1380</text><path d="M526.3,484 H531.8 L529.0,488 Z" fill="#9ed1d1"/><rect x="355" y="500" width="63.5" height="27" fill="#50b071"/><rect x="418.5" y="500" width="177.5" height="27" fill="#b8e0e0"/><rect x="418.5" y="500" width="1" height="27" fill="rgba(255,255,255,0.3)"/><rect x="595" y="500" width="1" height="27" fill="rgba(0,0,0,0.2)"/><rect x="417.5" y="500" width="1" height="27" fill="rgba(0,0,0,0.2)"/><rect x="355" y="500" width="1" height="27" fill="rgba(255,255,255,0.2)"/><path d="M418.5,507.5 C416.5,506.5 414.5,506 412.5,506 C411.0,506 410.5,507.5 410.5,509 V516.5 C410.5,518.5 411.5,520 413.0,520 C415.0,520 416.5,518.5 418.5,517.5 Z" fill="#b8e0e0"/><path d="M418.5,507.5 C416.5,506.5 414.5,506 412.5,506 C411.0,506 410.5,507.5 410.5,509 V516.5 C410.5,518.5 411.5,520 413.0,520 C415.0,520 416.5,518.5 418.5,517.5" fill="none" stroke="rgba(0,0,0,0.4)" stroke-width="0.9"/><path d="M355,499.5 H369.5 l6,4 h3.5 l6,-4 H596" fill="none" stroke="rgba(0,0,0,0.24)" stroke-width="1"/><path d="M357,500.5 H369.5 l6,4 h3.5 l6,-4 H596" fill="none" stroke="rgba(255,255,255,0.2)" stroke-width="1"/><rect x="355" y="499" width="1.2" height="1.2" fill="rgba(0,0,0,0.6)"/><text x="365.3" y="517.8" font-family="Liberation Sans" font-size="14.67" fill="#fff">show</text><g transform="translate(428.5,505.5)"><path d="M1,4.5 L8,8 V15 L1,11.5 Z" fill="#fff"/><g fill="none" stroke="#fff" stroke-width="1.8" stroke-linejoin="round"><path d="M8,0.9 L15,4.5 V11.5 L8,15 L1,11.5 V4.5 Z"/><path d="M1,4.5 L8,8 L15,4.5 M8,8 V15"/></g></g><rect x="449.5" y="505" width="139.9" height="16" rx="4.5" fill="#e1f2f2"/><text x="454.5" y="517.9" font-family="Liberation Sans" font-size="14.67" fill="#000">Virsma 1200x680</text><path d="M575.7,511 H581.2 L578.5,515 Z" fill="#9ed1d1"/><rect x="355" y="527" width="63.5" height="27" fill="#50b071"/><rect x="418.5" y="527" width="136.5" height="27" fill="#b8e0e0"/><rect x="418.5" y="527" width="1" height="27" fill="rgba(255,255,255,0.3)"/><rect x="554" y="527" width="1" height="27" fill="rgba(0,0,0,0.2)"/><rect x="417.5" y="527" width="1" height="27" fill="rgba(0,0,0,0.2)"/><rect x="355" y="527" width="1" height="27" fill="rgba(255,255,255,0.2)"/><path d="M418.5,534.5 C416.5,533.5 414.5,533 412.5,533 C411.0,533 410.5,534.5 410.5,536 V543.5 C410.5,545.5 411.5,547 413.0,547 C415.0,547 416.5,545.5 418.5,544.5 Z" fill="#b8e0e0"/><path d="M418.5,534.5 C416.5,533.5 414.5,533 412.5,533 C411.0,533 410.5,534.5 410.5,536 V543.5 C410.5,545.5 411.5,547 413.0,547 C415.0,547 416.5,545.5 418.5,544.5" fill="none" stroke="rgba(0,0,0,0.4)" stroke-width="0.9"/><path d="M355,526.5 H369.5 l6,4 h3.5 l6,-4 H555" fill="none" stroke="rgba(0,0,0,0.24)" stroke-width="1"/><path d="M357,527.5 H369.5 l6,4 h3.5 l6,-4 H555" fill="none" stroke="rgba(255,255,255,0.2)" stroke-width="1"/><rect x="355" y="526" width="1.2" height="1.2" fill="rgba(0,0,0,0.6)"/><text x="365.3" y="544.8" font-family="Liberation Sans" font-size="14.67" fill="#fff">show</text><g transform="translate(428.5,532.5)"><path d="M1,4.5 L8,8 V15 L1,11.5 Z" fill="#fff"/><g fill="none" stroke="#fff" stroke-width="1.8" stroke-linejoin="round"><path d="M8,0.9 L15,4.5 V11.5 L8,15 L1,11.5 V4.5 Z"/><path d="M1,4.5 L8,8 L15,4.5 M8,8 V15"/></g></g><rect x="449.5" y="532" width="99.4" height="16" rx="4.5" fill="#e1f2f2"/><text x="454.5" y="544.9" font-family="Liberation Sans" font-size="14.67" fill="#000">Kajas 1200</text><path d="M535.2,538 H540.7 L538.0,542 Z" fill="#9ed1d1"/><path d="M355,554 H418.5 V581 H361 Q355,581 355,575 Z" fill="#50b071"/><path d="M355.2,575 Q355.2,581.8 361,581.8 H369.5" fill="none" stroke="rgba(0,0,0,0.7)" stroke-width="1.8"/><path d="M354,575 Q354,583.2 361,583.2 H368" fill="none" stroke="rgba(255,255,255,0.15)" stroke-width="1"/><rect x="418.5" y="554" width="134.5" height="27" fill="#b8e0e0"/><rect x="418.5" y="554" width="1" height="27" fill="rgba(255,255,255,0.3)"/><rect x="552" y="554" width="1" height="27" fill="rgba(0,0,0,0.2)"/><rect x="417.5" y="554" width="1" height="27" fill="rgba(0,0,0,0.2)"/><rect x="355" y="554" width="1" height="27" fill="rgba(255,255,255,0.2)"/><path d="M418.5,561.5 C416.5,560.5 414.5,560 412.5,560 C411.0,560 410.5,561.5 410.5,563 V570.5 C410.5,572.5 411.5,574 413.0,574 C415.0,574 416.5,572.5 418.5,571.5 Z" fill="#b8e0e0"/><path d="M418.5,561.5 C416.5,560.5 414.5,560 412.5,560 C411.0,560 410.5,561.5 410.5,563 V570.5 C410.5,572.5 411.5,574 413.0,574 C415.0,574 416.5,572.5 418.5,571.5" fill="none" stroke="rgba(0,0,0,0.4)" stroke-width="0.9"/><path d="M355,553.5 H369.5 l6,4 h3.5 l6,-4 H553" fill="none" stroke="rgba(0,0,0,0.24)" stroke-width="1"/><path d="M357,554.5 H369.5 l6,4 h3.5 l6,-4 H553" fill="none" stroke="rgba(255,255,255,0.2)" stroke-width="1"/><rect x="355" y="553" width="1.2" height="1.2" fill="rgba(0,0,0,0.6)"/><text x="365.3" y="571.8" font-family="Liberation Sans" font-size="14.67" fill="#fff">show</text><g transform="translate(428.5,559.5)"><path d="M1,4.5 L8,8 V15 L1,11.5 Z" fill="#fff"/><g fill="none" stroke="#fff" stroke-width="1.8" stroke-linejoin="round"><path d="M8,0.9 L15,4.5 V11.5 L8,15 L1,11.5 V4.5 Z"/><path d="M1,4.5 L8,8 L15,4.5 M8,8 V15"/></g></g><rect x="449.5" y="559" width="97.0" height="16" rx="4.5" fill="#e1f2f2"/><text x="454.5" y="571.9" font-family="Liberation Sans" font-size="14.67" fill="#000">Peda 1200</text><path d="M532.8,565 H538.3 L535.5,569 Z" fill="#9ed1d1"/><path d="M369.5,581 l6,4 h3.5 l6,-4 Z" fill="#50b071"/><path d="M360,581.5 H369.5 l6,4 h3.5 l6,-4 H553" fill="none" stroke="rgba(0,0,0,0.24)" stroke-width="1"/><path d="M318,594 H384 V631 H355 V874 H385 V887 H318 Z" fill="#5382b4"/><path d="M319,594.5 H331.5 l6,4 h3.5 l6,-4 H384" fill="none" stroke="rgba(255,255,255,0.2)" stroke-width="1"/><rect x="318" y="594" width="1" height="292" fill="rgba(255,255,255,0.2)"/><rect x="354" y="631" width="1" height="243" fill="rgba(0,0,0,0.24)"/><path d="M369,631 l6.5,4.2 h3.5 l6.5,-4.2 Z" fill="#5382b4"/><rect x="318" y="886" width="67" height="1" fill="rgba(0,0,0,0.35)"/><rect x="384" y="874" width="1" height="12" fill="rgba(0,0,0,0.24)"/><rect x="355" y="874" width="30" height="1" fill="rgba(255,255,255,0.2)"/><rect x="384" y="594" width="354" height="37" fill="#5382b4"/><rect x="385" y="594" width="353" height="1" fill="rgba(255,255,255,0.2)"/><rect x="385" y="594" width="1" height="37" fill="rgba(255,255,255,0.2)"/><rect x="384" y="630" width="354" height="1" fill="rgba(0,0,0,0.28)"/><rect x="737" y="594" width="1" height="37" fill="rgba(0,0,0,0.28)"/><rect x="384" y="594" width="1" height="7.5" fill="rgba(0,0,0,0.3)"/><rect x="384" y="611.5" width="1" height="19.5" fill="rgba(0,0,0,0.3)"/><path d="M384.5,601.5 C382.5,600.5 380.5,600 378.5,600 C377.0,600 376.5,601.5 376.5,603 V610.5 C376.5,612.5 377.5,614 379.0,614 C381.0,614 382.5,612.5 384.5,611.5 Z" fill="#5382b4"/><path d="M384.5,601.5 C382.5,600.5 380.5,600 378.5,600 C377.0,600 376.5,601.5 376.5,603 V610.5 C376.5,612.5 377.5,614 379.0,614 C381.0,614 382.5,612.5 384.5,611.5" fill="none" stroke="rgba(0,0,0,0.4)" stroke-width="0.9"/><rect x="328.5" y="599.5" width="15.5" height="16" rx="3.5" fill="#2c3ee8" stroke="#a6b5de" stroke-width="1"/><g transform="translate(336.2,607.5)"><circle r="4.3" fill="#c9d2ea"/><g stroke="#c9d2ea" stroke-width="2.2"><path d="M0,-5.6 V5.6 M-4.9,-2.8 L4.9,2.8 M-4.9,2.8 L4.9,-2.8"/></g><circle r="1.9" fill="#2c3ee8"/></g><text x="355.3" y="612" font-family="Liberation Sans" font-size="14.67" fill="#fff">if</text><text x="328" y="647.5" font-family="Liberation Sans" font-size="14.67" fill="#fff">do</text><rect x="402" y="600" width="136" height="26" fill="#d6ac3a"/><path d="M402,607.5 C400,606.5 398,606 396,606 C394.5,606 394,607.5 394,609 V616.5 C394,618.5 395,620 396.5,620 C398.5,620 400,618.5 402,617.5 Z" fill="#d6ac3a"/><path d="M402,607.5 C400,606.5 398,606 396,606 C394.5,606 394,607.5 394,609 V616.5 C394,618.5 395,620 396.5,620 C398.5,620 400,618.5 402,617.5" fill="none" stroke="rgba(0,0,0,0.4)" stroke-width="0.9"/><rect x="402" y="600" width="135" height="1" fill="rgba(255,255,255,0.2)"/><rect x="402" y="625" width="135" height="1" fill="rgba(0,0,0,0.24)"/><rect x="536" y="600" width="1" height="26" fill="rgba(0,0,0,0.3)"/><text x="412.5" y="618.3" font-family="Liberation Sans" font-size="14.67" fill="#fff">product attribute</text><rect x="537" y="600" width="69" height="26" fill="#b8e1d1"/><path d="M537,607.5 C535,606.5 533,606 531,606 C529.5,606 529,607.5 529,609 V616.5 C529,618.5 530,620 531.5,620 C533.5,620 535,618.5 537,617.5 Z" fill="#b8e1d1"/><path d="M537,607.5 C535,606.5 533,606 531,606 C529.5,606 529,607.5 529,609 V616.5 C529,618.5 530,620 531.5,620 C533.5,620 535,618.5 537,617.5" fill="none" stroke="rgba(0,0,0,0.4)" stroke-width="0.9"/><rect x="537" y="600" width="69" height="1" fill="rgba(255,255,255,0.2)"/><rect x="537" y="625" width="69" height="1" fill="rgba(0,0,0,0.24)"/><rect x="605" y="600" width="1" height="26" fill="rgba(0,0,0,0.24)"/><rect x="564.5" y="605" width="14" height="16" rx="4" fill="#e1f3eb"/><path d="M547.9000000000001,613.6 C547.7,610.5 549.3000000000001,607.8 552.3000000000001,606.2 L552.7,607.1 C551.1,608.4 550.3000000000001,609.8 550.5,611 C551.9000000000001,611 552.8000000000001,612 552.8000000000001,613.5 A2.5,2.5 0 1 1 547.9000000000001,613.6 Z" fill="#fff"/><path d="M554.2,613.6 C554.0,610.5 555.6,607.8 558.6,606.2 L559.0,607.1 C557.4,608.4 556.6,609.8 556.8,611 C558.2,611 559.1,612 559.1,613.5 A2.5,2.5 0 1 1 554.2,613.6 Z" fill="#fff"/><g transform="rotate(180 589.3 611.3)"><path d="M583.7,613.9 C583.5,610.8 585.1,608.0999999999999 588.1,606.5 L588.5,607.4 C586.9,608.6999999999999 586.1,610.0999999999999 586.3,611.3 C587.7,611.3 588.6,612.3 588.6,613.8 A2.5,2.5 0 1 1 583.7,613.9 Z" fill="#fff"/><path d="M590.2,613.9 C590.0,610.8 591.6,608.0999999999999 594.6,606.5 L595.0,607.4 C593.4,608.6999999999999 592.6,610.0999999999999 592.8,611.3 C594.2,611.3 595.1,612.3 595.1,613.8 A2.5,2.5 0 1 1 590.2,613.9 Z" fill="#fff"/></g><rect x="611" y="604" width="35" height="16" rx="5" fill="#bacde2"/><rect x="617" y="609" width="7.3" height="1.1" fill="#000"/><rect x="617" y="613.1" width="7.3" height="1.1" fill="#000"/><path d="M632.8,610 H638 L635.4,614 Z" fill="#4a7db3"/><rect x="658" y="600" width="69" height="26" fill="#52b18d"/><path d="M658,607.5 C656,606.5 654,606 652,606 C650.5,606 650,607.5 650,609 V616.5 C650,618.5 651,620 652.5,620 C654.5,620 656,618.5 658,617.5 Z" fill="#52b18d"/><path d="M658,607.5 C656,606.5 654,606 652,606 C650.5,606 650,607.5 650,609 V616.5 C650,618.5 651,620 652.5,620 C654.5,620 656,618.5 658,617.5" fill="none" stroke="rgba(0,0,0,0.4)" stroke-width="0.9"/><rect x="658" y="600" width="69" height="1" fill="rgba(255,255,255,0.2)"/><rect x="658" y="625" width="69" height="1" fill="rgba(0,0,0,0.24)"/><rect x="726" y="600" width="1" height="26" fill="rgba(0,0,0,0.24)"/><rect x="685.5" y="605" width="14" height="16" rx="4" fill="#b8e1d0"/><path d="M668.9000000000001,613.6 C668.7,610.5 670.3000000000001,607.8 673.3000000000001,606.2 L673.7,607.1 C672.1,608.4 671.3000000000001,609.8 671.5,611 C672.9000000000001,611 673.8000000000001,612 673.8000000000001,613.5 A2.5,2.5 0 1 1 668.9000000000001,613.6 Z" fill="#fff"/><path d="M675.2,613.6 C675.0,610.5 676.6,607.8 679.6,606.2 L680.0,607.1 C678.4,608.4 677.6,609.8 677.8,611 C679.2,611 680.1,612 680.1,613.5 A2.5,2.5 0 1 1 675.2,613.6 Z" fill="#fff"/><g transform="rotate(180 710.3 611.3)"><path d="M704.7,613.9 C704.5,610.8 706.1,608.0999999999999 709.1,606.5 L709.5,607.4 C707.9,608.6999999999999 707.1,610.0999999999999 707.3,611.3 C708.7,611.3 709.6,612.3 709.6,613.8 A2.5,2.5 0 1 1 704.7,613.9 Z" fill="#fff"/><path d="M711.2,613.9 C711.0,610.8 712.6,608.0999999999999 715.6,606.5 L716.0,607.4 C714.4,608.6999999999999 713.6,610.0999999999999 713.8,611.3 C715.2,611.3 716.1,612.3 716.1,613.8 A2.5,2.5 0 1 1 711.2,613.9 Z" fill="#fff"/></g><rect x="355" y="631" width="8" height="8" fill="#5382b4"/><path d="M355,637 Q355,631 361,631 H369.5 l6,4 h3.5 l6,-4 H412 V658 H355 Z" fill="#50b071"/><path d="M355.5,637 Q355.5,631.5 361,631.5 H369.5 l6,4 h3.5 l6,-4 H412" fill="none" stroke="rgba(255,255,255,0.2)" stroke-width="1"/><path d="M354.5,637 Q354.5,630.5 361,630.5 H369" fill="none" stroke="rgba(0,0,0,0.3)" stroke-width="1"/><rect x="412" y="631" width="177" height="27" fill="#b8e0e0"/><rect x="412" y="631" width="1" height="27" fill="rgba(255,255,255,0.3)"/><rect x="588" y="631" width="1" height="27" fill="rgba(0,0,0,0.2)"/><rect x="411" y="631" width="1" height="27" fill="rgba(0,0,0,0.2)"/><rect x="355" y="631" width="1" height="27" fill="rgba(255,255,255,0.2)"/><path d="M412,638.5 C410,637.5 408,637 406,637 C404.5,637 404,638.5 404,640 V647.5 C404,649.5 405,651 406.5,651 C408.5,651 410,649.5 412,648.5 Z" fill="#b8e0e0"/><path d="M412,638.5 C410,637.5 408,637 406,637 C404.5,637 404,638.5 404,640 V647.5 C404,649.5 405,651 406.5,651 C408.5,651 410,649.5 412,648.5" fill="none" stroke="rgba(0,0,0,0.4)" stroke-width="0.9"/><text x="365.7" y="648.8" font-family="Liberation Sans" font-size="14.67" fill="#fff">hide</text><g transform="translate(422,636.5)"><path d="M1,4.5 L8,8 V15 L1,11.5 Z" fill="#fff"/><g fill="none" stroke="#fff" stroke-width="1.8" stroke-linejoin="round"><path d="M8,0.9 L15,4.5 V11.5 L8,15 L1,11.5 V4.5 Z"/><path d="M1,4.5 L8,8 L15,4.5 M8,8 V15"/></g></g><rect x="443" y="636" width="139.9" height="16" rx="4.5" fill="#e1f2f2"/><text x="448" y="648.9" font-family="Liberation Sans" font-size="14.67" fill="#000">Virsma 1600x800</text><path d="M569.2,642 H574.7 L572.0,646 Z" fill="#9ed1d1"/><rect x="355" y="658" width="57" height="27" fill="#50b071"/><rect x="412" y="658" width="177" height="27" fill="#b8e0e0"/><rect x="412" y="658" width="1" height="27" fill="rgba(255,255,255,0.3)"/><rect x="588" y="658" width="1" height="27" fill="rgba(0,0,0,0.2)"/><rect x="411" y="658" width="1" height="27" fill="rgba(0,0,0,0.2)"/><rect x="355" y="658" width="1" height="27" fill="rgba(255,255,255,0.2)"/><path d="M412,665.5 C410,664.5 408,664 406,664 C404.5,664 404,665.5 404,667 V674.5 C404,676.5 405,678 406.5,678 C408.5,678 410,676.5 412,675.5 Z" fill="#b8e0e0"/><path d="M412,665.5 C410,664.5 408,664 406,664 C404.5,664 404,665.5 404,667 V674.5 C404,676.5 405,678 406.5,678 C408.5,678 410,676.5 412,675.5" fill="none" stroke="rgba(0,0,0,0.4)" stroke-width="0.9"/><path d="M355,657.5 H369.5 l6,4 h3.5 l6,-4 H589" fill="none" stroke="rgba(0,0,0,0.24)" stroke-width="1"/><path d="M357,658.5 H369.5 l6,4 h3.5 l6,-4 H589" fill="none" stroke="rgba(255,255,255,0.2)" stroke-width="1"/><rect x="355" y="657" width="1.2" height="1.2" fill="rgba(0,0,0,0.6)"/><text x="365.7" y="675.8" font-family="Liberation Sans" font-size="14.67" fill="#fff">hide</text><g transform="translate(422,663.5)"><path d="M1,4.5 L8,8 V15 L1,11.5 Z" fill="#fff"/><g fill="none" stroke="#fff" stroke-width="1.8" stroke-linejoin="round"><path d="M8,0.9 L15,4.5 V11.5 L8,15 L1,11.5 V4.5 Z"/><path d="M1,4.5 L8,8 L15,4.5 M8,8 V15"/></g></g><rect x="443" y="663" width="139.9" height="16" rx="4.5" fill="#e1f2f2"/><text x="448" y="675.9" font-family="Liberation Sans" font-size="14.67" fill="#000">Virsma 1200x680</text><path d="M569.2,669 H574.7 L572.0,673 Z" fill="#9ed1d1"/><rect x="355" y="685" width="57" height="27" fill="#50b071"/><rect x="412" y="685" width="137" height="27" fill="#b8e0e0"/><rect x="412" y="685" width="1" height="27" fill="rgba(255,255,255,0.3)"/><rect x="548" y="685" width="1" height="27" fill="rgba(0,0,0,0.2)"/><rect x="411" y="685" width="1" height="27" fill="rgba(0,0,0,0.2)"/><rect x="355" y="685" width="1" height="27" fill="rgba(255,255,255,0.2)"/><path d="M412,692.5 C410,691.5 408,691 406,691 C404.5,691 404,692.5 404,694 V701.5 C404,703.5 405,705 406.5,705 C408.5,705 410,703.5 412,702.5 Z" fill="#b8e0e0"/><path d="M412,692.5 C410,691.5 408,691 406,691 C404.5,691 404,692.5 404,694 V701.5 C404,703.5 405,705 406.5,705 C408.5,705 410,703.5 412,702.5" fill="none" stroke="rgba(0,0,0,0.4)" stroke-width="0.9"/><path d="M355,684.5 H369.5 l6,4 h3.5 l6,-4 H549" fill="none" stroke="rgba(0,0,0,0.24)" stroke-width="1"/><path d="M357,685.5 H369.5 l6,4 h3.5 l6,-4 H549" fill="none" stroke="rgba(255,255,255,0.2)" stroke-width="1"/><rect x="355" y="684" width="1.2" height="1.2" fill="rgba(0,0,0,0.6)"/><text x="365.7" y="702.8" font-family="Liberation Sans" font-size="14.67" fill="#fff">hide</text><g transform="translate(422,690.5)"><path d="M1,4.5 L8,8 V15 L1,11.5 Z" fill="#fff"/><g fill="none" stroke="#fff" stroke-width="1.8" stroke-linejoin="round"><path d="M8,0.9 L15,4.5 V11.5 L8,15 L1,11.5 V4.5 Z"/><path d="M1,4.5 L8,8 L15,4.5 M8,8 V15"/></g></g><rect x="443" y="690" width="99.4" height="16" rx="4.5" fill="#e1f2f2"/><text x="448" y="702.9" font-family="Liberation Sans" font-size="14.67" fill="#000">Kajas 1600</text><path d="M528.7,696 H534.2 L531.5,700 Z" fill="#9ed1d1"/><rect x="355" y="712" width="57" height="27" fill="#50b071"/><rect x="412" y="712" width="137" height="27" fill="#b8e0e0"/><rect x="412" y="712" width="1" height="27" fill="rgba(255,255,255,0.3)"/><rect x="548" y="712" width="1" height="27" fill="rgba(0,0,0,0.2)"/><rect x="411" y="712" width="1" height="27" fill="rgba(0,0,0,0.2)"/><rect x="355" y="712" width="1" height="27" fill="rgba(255,255,255,0.2)"/><path d="M412,719.5 C410,718.5 408,718 406,718 C404.5,718 404,719.5 404,721 V728.5 C404,730.5 405,732 406.5,732 C408.5,732 410,730.5 412,729.5 Z" fill="#b8e0e0"/><path d="M412,719.5 C410,718.5 408,718 406,718 C404.5,718 404,719.5 404,721 V728.5 C404,730.5 405,732 406.5,732 C408.5,732 410,730.5 412,729.5" fill="none" stroke="rgba(0,0,0,0.4)" stroke-width="0.9"/><path d="M355,711.5 H369.5 l6,4 h3.5 l6,-4 H549" fill="none" stroke="rgba(0,0,0,0.24)" stroke-width="1"/><path d="M357,712.5 H369.5 l6,4 h3.5 l6,-4 H549" fill="none" stroke="rgba(255,255,255,0.2)" stroke-width="1"/><rect x="355" y="711" width="1.2" height="1.2" fill="rgba(0,0,0,0.6)"/><text x="365.7" y="729.8" font-family="Liberation Sans" font-size="14.67" fill="#fff">hide</text><g transform="translate(422,717.5)"><path d="M1,4.5 L8,8 V15 L1,11.5 Z" fill="#fff"/><g fill="none" stroke="#fff" stroke-width="1.8" stroke-linejoin="round"><path d="M8,0.9 L15,4.5 V11.5 L8,15 L1,11.5 V4.5 Z"/><path d="M1,4.5 L8,8 L15,4.5 M8,8 V15"/></g></g><rect x="443" y="717" width="99.4" height="16" rx="4.5" fill="#e1f2f2"/><text x="448" y="729.9" font-family="Liberation Sans" font-size="14.67" fill="#000">Kajas 1200</text><path d="M528.7,723 H534.2 L531.5,727 Z" fill="#9ed1d1"/><rect x="355" y="739" width="57" height="27" fill="#50b071"/><rect x="412" y="739" width="134" height="27" fill="#b8e0e0"/><rect x="412" y="739" width="1" height="27" fill="rgba(255,255,255,0.3)"/><rect x="545" y="739" width="1" height="27" fill="rgba(0,0,0,0.2)"/><rect x="411" y="739" width="1" height="27" fill="rgba(0,0,0,0.2)"/><rect x="355" y="739" width="1" height="27" fill="rgba(255,255,255,0.2)"/><path d="M412,746.5 C410,745.5 408,745 406,745 C404.5,745 404,746.5 404,748 V755.5 C404,757.5 405,759 406.5,759 C408.5,759 410,757.5 412,756.5 Z" fill="#b8e0e0"/><path d="M412,746.5 C410,745.5 408,745 406,745 C404.5,745 404,746.5 404,748 V755.5 C404,757.5 405,759 406.5,759 C408.5,759 410,757.5 412,756.5" fill="none" stroke="rgba(0,0,0,0.4)" stroke-width="0.9"/><path d="M355,738.5 H369.5 l6,4 h3.5 l6,-4 H546" fill="none" stroke="rgba(0,0,0,0.24)" stroke-width="1"/><path d="M357,739.5 H369.5 l6,4 h3.5 l6,-4 H546" fill="none" stroke="rgba(255,255,255,0.2)" stroke-width="1"/><rect x="355" y="738" width="1.2" height="1.2" fill="rgba(0,0,0,0.6)"/><text x="365.7" y="756.8" font-family="Liberation Sans" font-size="14.67" fill="#fff">hide</text><g transform="translate(422,744.5)"><path d="M1,4.5 L8,8 V15 L1,11.5 Z" fill="#fff"/><g fill="none" stroke="#fff" stroke-width="1.8" stroke-linejoin="round"><path d="M8,0.9 L15,4.5 V11.5 L8,15 L1,11.5 V4.5 Z"/><path d="M1,4.5 L8,8 L15,4.5 M8,8 V15"/></g></g><rect x="443" y="744" width="97.0" height="16" rx="4.5" fill="#e1f2f2"/><text x="448" y="756.9" font-family="Liberation Sans" font-size="14.67" fill="#000">Peda 1600</text><path d="M526.3,750 H531.8 L529.0,754 Z" fill="#9ed1d1"/><rect x="355" y="766" width="57" height="27" fill="#50b071"/><rect x="412" y="766" width="134" height="27" fill="#b8e0e0"/><rect x="412" y="766" width="1" height="27" fill="rgba(255,255,255,0.3)"/><rect x="545" y="766" width="1" height="27" fill="rgba(0,0,0,0.2)"/><rect x="411" y="766" width="1" height="27" fill="rgba(0,0,0,0.2)"/><rect x="355" y="766" width="1" height="27" fill="rgba(255,255,255,0.2)"/><path d="M412,773.5 C410,772.5 408,772 406,772 C404.5,772 404,773.5 404,775 V782.5 C404,784.5 405,786 406.5,786 C408.5,786 410,784.5 412,783.5 Z" fill="#b8e0e0"/><path d="M412,773.5 C410,772.5 408,772 406,772 C404.5,772 404,773.5 404,775 V782.5 C404,784.5 405,786 406.5,786 C408.5,786 410,784.5 412,783.5" fill="none" stroke="rgba(0,0,0,0.4)" stroke-width="0.9"/><path d="M355,765.5 H369.5 l6,4 h3.5 l6,-4 H546" fill="none" stroke="rgba(0,0,0,0.24)" stroke-width="1"/><path d="M357,766.5 H369.5 l6,4 h3.5 l6,-4 H546" fill="none" stroke="rgba(255,255,255,0.2)" stroke-width="1"/><rect x="355" y="765" width="1.2" height="1.2" fill="rgba(0,0,0,0.6)"/><text x="365.7" y="783.8" font-family="Liberation Sans" font-size="14.67" fill="#fff">hide</text><g transform="translate(422,771.5)"><path d="M1,4.5 L8,8 V15 L1,11.5 Z" fill="#fff"/><g fill="none" stroke="#fff" stroke-width="1.8" stroke-linejoin="round"><path d="M8,0.9 L15,4.5 V11.5 L8,15 L1,11.5 V4.5 Z"/><path d="M1,4.5 L8,8 L15,4.5 M8,8 V15"/></g></g><rect x="443" y="771" width="97.0" height="16" rx="4.5" fill="#e1f2f2"/><text x="448" y="783.9" font-family="Liberation Sans" font-size="14.67" fill="#000">Peda 1200</text><path d="M526.3,777 H531.8 L529.0,781 Z" fill="#9ed1d1"/><rect x="355" y="793" width="63.5" height="27" fill="#50b071"/><rect x="418.5" y="793" width="177.5" height="27" fill="#b8e0e0"/><rect x="418.5" y="793" width="1" height="27" fill="rgba(255,255,255,0.3)"/><rect x="595" y="793" width="1" height="27" fill="rgba(0,0,0,0.2)"/><rect x="417.5" y="793" width="1" height="27" fill="rgba(0,0,0,0.2)"/><rect x="355" y="793" width="1" height="27" fill="rgba(255,255,255,0.2)"/><path d="M418.5,800.5 C416.5,799.5 414.5,799 412.5,799 C411.0,799 410.5,800.5 410.5,802 V809.5 C410.5,811.5 411.5,813 413.0,813 C415.0,813 416.5,811.5 418.5,810.5 Z" fill="#b8e0e0"/><path d="M418.5,800.5 C416.5,799.5 414.5,799 412.5,799 C411.0,799 410.5,800.5 410.5,802 V809.5 C410.5,811.5 411.5,813 413.0,813 C415.0,813 416.5,811.5 418.5,810.5" fill="none" stroke="rgba(0,0,0,0.4)" stroke-width="0.9"/><path d="M355,792.5 H369.5 l6,4 h3.5 l6,-4 H596" fill="none" stroke="rgba(0,0,0,0.24)" stroke-width="1"/><path d="M357,793.5 H369.5 l6,4 h3.5 l6,-4 H596" fill="none" stroke="rgba(255,255,255,0.2)" stroke-width="1"/><rect x="355" y="792" width="1.2" height="1.2" fill="rgba(0,0,0,0.6)"/><text x="365.3" y="810.8" font-family="Liberation Sans" font-size="14.67" fill="#fff">show</text><g transform="translate(428.5,798.5)"><path d="M1,4.5 L8,8 V15 L1,11.5 Z" fill="#fff"/><g fill="none" stroke="#fff" stroke-width="1.8" stroke-linejoin="round"><path d="M8,0.9 L15,4.5 V11.5 L8,15 L1,11.5 V4.5 Z"/><path d="M1,4.5 L8,8 L15,4.5 M8,8 V15"/></g></g><rect x="449.5" y="798" width="139.9" height="16" rx="4.5" fill="#e1f2f2"/><text x="454.5" y="810.9" font-family="Liberation Sans" font-size="14.67" fill="#000">Virsma 1380x680</text><path d="M575.7,804 H581.2 L578.5,808 Z" fill="#9ed1d1"/><rect x="355" y="820" width="63.5" height="27" fill="#50b071"/><rect x="418.5" y="820" width="136.5" height="27" fill="#b8e0e0"/><rect x="418.5" y="820" width="1" height="27" fill="rgba(255,255,255,0.3)"/><rect x="554" y="820" width="1" height="27" fill="rgba(0,0,0,0.2)"/><rect x="417.5" y="820" width="1" height="27" fill="rgba(0,0,0,0.2)"/><rect x="355" y="820" width="1" height="27" fill="rgba(255,255,255,0.2)"/><path d="M418.5,827.5 C416.5,826.5 414.5,826 412.5,826 C411.0,826 410.5,827.5 410.5,829 V836.5 C410.5,838.5 411.5,840 413.0,840 C415.0,840 416.5,838.5 418.5,837.5 Z" fill="#b8e0e0"/><path d="M418.5,827.5 C416.5,826.5 414.5,826 412.5,826 C411.0,826 410.5,827.5 410.5,829 V836.5 C410.5,838.5 411.5,840 413.0,840 C415.0,840 416.5,838.5 418.5,837.5" fill="none" stroke="rgba(0,0,0,0.4)" stroke-width="0.9"/><path d="M355,819.5 H369.5 l6,4 h3.5 l6,-4 H555" fill="none" stroke="rgba(0,0,0,0.24)" stroke-width="1"/><path d="M357,820.5 H369.5 l6,4 h3.5 l6,-4 H555" fill="none" stroke="rgba(255,255,255,0.2)" stroke-width="1"/><rect x="355" y="819" width="1.2" height="1.2" fill="rgba(0,0,0,0.6)"/><text x="365.3" y="837.8" font-family="Liberation Sans" font-size="14.67" fill="#fff">show</text><g transform="translate(428.5,825.5)"><path d="M1,4.5 L8,8 V15 L1,11.5 Z" fill="#fff"/><g fill="none" stroke="#fff" stroke-width="1.8" stroke-linejoin="round"><path d="M8,0.9 L15,4.5 V11.5 L8,15 L1,11.5 V4.5 Z"/><path d="M1,4.5 L8,8 L15,4.5 M8,8 V15"/></g></g><rect x="449.5" y="825" width="99.4" height="16" rx="4.5" fill="#e1f2f2"/><text x="454.5" y="837.9" font-family="Liberation Sans" font-size="14.67" fill="#000">Kajas 1380</text><path d="M535.2,831 H540.7 L538.0,835 Z" fill="#9ed1d1"/><path d="M355,847 H418.5 V874 H361 Q355,874 355,868 Z" fill="#50b071"/><path d="M355.2,868 Q355.2,874.8 361,874.8 H369.5" fill="none" stroke="rgba(0,0,0,0.7)" stroke-width="1.8"/><path d="M354,868 Q354,876.2 361,876.2 H368" fill="none" stroke="rgba(255,255,255,0.15)" stroke-width="1"/><rect x="418.5" y="847" width="134.5" height="27" fill="#b8e0e0"/><rect x="418.5" y="847" width="1" height="27" fill="rgba(255,255,255,0.3)"/><rect x="552" y="847" width="1" height="27" fill="rgba(0,0,0,0.2)"/><rect x="417.5" y="847" width="1" height="27" fill="rgba(0,0,0,0.2)"/><rect x="355" y="847" width="1" height="27" fill="rgba(255,255,255,0.2)"/><path d="M418.5,854.5 C416.5,853.5 414.5,853 412.5,853 C411.0,853 410.5,854.5 410.5,856 V863.5 C410.5,865.5 411.5,867 413.0,867 C415.0,867 416.5,865.5 418.5,864.5 Z" fill="#b8e0e0"/><path d="M418.5,854.5 C416.5,853.5 414.5,853 412.5,853 C411.0,853 410.5,854.5 410.5,856 V863.5 C410.5,865.5 411.5,867 413.0,867 C415.0,867 416.5,865.5 418.5,864.5" fill="none" stroke="rgba(0,0,0,0.4)" stroke-width="0.9"/><path d="M355,846.5 H369.5 l6,4 h3.5 l6,-4 H553" fill="none" stroke="rgba(0,0,0,0.24)" stroke-width="1"/><path d="M357,847.5 H369.5 l6,4 h3.5 l6,-4 H553" fill="none" stroke="rgba(255,255,255,0.2)" stroke-width="1"/><rect x="355" y="846" width="1.2" height="1.2" fill="rgba(0,0,0,0.6)"/><text x="365.3" y="864.8" font-family="Liberation Sans" font-size="14.67" fill="#fff">show</text><g transform="translate(428.5,852.5)"><path d="M1,4.5 L8,8 V15 L1,11.5 Z" fill="#fff"/><g fill="none" stroke="#fff" stroke-width="1.8" stroke-linejoin="round"><path d="M8,0.9 L15,4.5 V11.5 L8,15 L1,11.5 V4.5 Z"/><path d="M1,4.5 L8,8 L15,4.5 M8,8 V15"/></g></g><rect x="449.5" y="852" width="97.0" height="16" rx="4.5" fill="#e1f2f2"/><text x="454.5" y="864.9" font-family="Liberation Sans" font-size="14.67" fill="#000">Peda 1380</text><path d="M532.8,858 H538.3 L535.5,862 Z" fill="#9ed1d1"/><path d="M369.5,874 l6,4 h3.5 l6,-4 Z" fill="#50b071"/><path d="M360,874.5 H369.5 l6,4 h3.5 l6,-4 H553" fill="none" stroke="rgba(0,0,0,0.24)" stroke-width="1"/><path d="M318,887 H384 V924 H355 V978 H385 V991 H318 Z" fill="#5382b4"/><path d="M319,887.5 H331.5 l6,4 h3.5 l6,-4 H384" fill="none" stroke="rgba(255,255,255,0.2)" stroke-width="1"/><rect x="318" y="887" width="1" height="103" fill="rgba(255,255,255,0.2)"/><rect x="354" y="924" width="1" height="54" fill="rgba(0,0,0,0.24)"/><path d="M369,924 l6.5,4.2 h3.5 l6.5,-4.2 Z" fill="#5382b4"/><rect x="318" y="990" width="67" height="1" fill="rgba(0,0,0,0.35)"/><rect x="384" y="978" width="1" height="12" fill="rgba(0,0,0,0.24)"/><rect x="355" y="978" width="30" height="1" fill="rgba(255,255,255,0.2)"/><rect x="384" y="887" width="354" height="37" fill="#5382b4"/><rect x="385" y="887" width="353" height="1" fill="rgba(255,255,255,0.2)"/><rect x="385" y="887" width="1" height="37" fill="rgba(255,255,255,0.2)"/><rect x="384" y="923" width="354" height="1" fill="rgba(0,0,0,0.28)"/><rect x="737" y="887" width="1" height="37" fill="rgba(0,0,0,0.28)"/><rect x="384" y="887" width="1" height="7.5" fill="rgba(0,0,0,0.3)"/><rect x="384" y="904.5" width="1" height="19.5" fill="rgba(0,0,0,0.3)"/><path d="M384.5,894.5 C382.5,893.5 380.5,893 378.5,893 C377.0,893 376.5,894.5 376.5,896 V903.5 C376.5,905.5 377.5,907 379.0,907 C381.0,907 382.5,905.5 384.5,904.5 Z" fill="#5382b4"/><path d="M384.5,894.5 C382.5,893.5 380.5,893 378.5,893 C377.0,893 376.5,894.5 376.5,896 V903.5 C376.5,905.5 377.5,907 379.0,907 C381.0,907 382.5,905.5 384.5,904.5" fill="none" stroke="rgba(0,0,0,0.4)" stroke-width="0.9"/><rect x="328.5" y="892.5" width="15.5" height="16" rx="3.5" fill="#2c3ee8" stroke="#a6b5de" stroke-width="1"/><g transform="translate(336.2,900.5)"><circle r="4.3" fill="#c9d2ea"/><g stroke="#c9d2ea" stroke-width="2.2"><path d="M0,-5.6 V5.6 M-4.9,-2.8 L4.9,2.8 M-4.9,2.8 L4.9,-2.8"/></g><circle r="1.9" fill="#2c3ee8"/></g><text x="355.3" y="905" font-family="Liberation Sans" font-size="14.67" fill="#fff">if</text><text x="328" y="940.5" font-family="Liberation Sans" font-size="14.67" fill="#fff">do</text><rect x="402" y="893" width="136" height="26" fill="#d6ac3a"/><path d="M402,900.5 C400,899.5 398,899 396,899 C394.5,899 394,900.5 394,902 V909.5 C394,911.5 395,913 396.5,913 C398.5,913 400,911.5 402,910.5 Z" fill="#d6ac3a"/><path d="M402,900.5 C400,899.5 398,899 396,899 C394.5,899 394,900.5 394,902 V909.5 C394,911.5 395,913 396.5,913 C398.5,913 400,911.5 402,910.5" fill="none" stroke="rgba(0,0,0,0.4)" stroke-width="0.9"/><rect x="402" y="893" width="135" height="1" fill="rgba(255,255,255,0.2)"/><rect x="402" y="918" width="135" height="1" fill="rgba(0,0,0,0.24)"/><rect x="536" y="893" width="1" height="26" fill="rgba(0,0,0,0.3)"/><text x="412.5" y="911.3" font-family="Liberation Sans" font-size="14.67" fill="#fff">product attribute</text><rect x="537" y="893" width="69" height="26" fill="#b8e1d1"/><path d="M537,900.5 C535,899.5 533,899 531,899 C529.5,899 529,900.5 529,902 V909.5 C529,911.5 530,913 531.5,913 C533.5,913 535,911.5 537,910.5 Z" fill="#b8e1d1"/><path d="M537,900.5 C535,899.5 533,899 531,899 C529.5,899 529,900.5 529,902 V909.5 C529,911.5 530,913 531.5,913 C533.5,913 535,911.5 537,910.5" fill="none" stroke="rgba(0,0,0,0.4)" stroke-width="0.9"/><rect x="537" y="893" width="69" height="1" fill="rgba(255,255,255,0.2)"/><rect x="537" y="918" width="69" height="1" fill="rgba(0,0,0,0.24)"/><rect x="605" y="893" width="1" height="26" fill="rgba(0,0,0,0.24)"/><rect x="564.5" y="898" width="14" height="16" rx="4" fill="#e1f3eb"/><path d="M547.9000000000001,906.6 C547.7,903.5 549.3000000000001,900.8 552.3000000000001,899.2 L552.7,900.1 C551.1,901.4 550.3000000000001,902.8 550.5,904 C551.9000000000001,904 552.8000000000001,905 552.8000000000001,906.5 A2.5,2.5 0 1 1 547.9000000000001,906.6 Z" fill="#fff"/><path d="M554.2,906.6 C554.0,903.5 555.6,900.8 558.6,899.2 L559.0,900.1 C557.4,901.4 556.6,902.8 556.8,904 C558.2,904 559.1,905 559.1,906.5 A2.5,2.5 0 1 1 554.2,906.6 Z" fill="#fff"/><g transform="rotate(180 589.3 904.3)"><path d="M583.7,906.9 C583.5,903.8 585.1,901.0999999999999 588.1,899.5 L588.5,900.4 C586.9,901.6999999999999 586.1,903.0999999999999 586.3,904.3 C587.7,904.3 588.6,905.3 588.6,906.8 A2.5,2.5 0 1 1 583.7,906.9 Z" fill="#fff"/><path d="M590.2,906.9 C590.0,903.8 591.6,901.0999999999999 594.6,899.5 L595.0,900.4 C593.4,901.6999999999999 592.6,903.0999999999999 592.8,904.3 C594.2,904.3 595.1,905.3 595.1,906.8 A2.5,2.5 0 1 1 590.2,906.9 Z" fill="#fff"/></g><rect x="611" y="897" width="35" height="16" rx="5" fill="#bacde2"/><rect x="617" y="902" width="7.3" height="1.1" fill="#000"/><rect x="617" y="906.1" width="7.3" height="1.1" fill="#000"/><path d="M632.8,903 H638 L635.4,907 Z" fill="#4a7db3"/><rect x="658" y="893" width="69" height="26" fill="#52b18d"/><path d="M658,900.5 C656,899.5 654,899 652,899 C650.5,899 650,900.5 650,902 V909.5 C650,911.5 651,913 652.5,913 C654.5,913 656,911.5 658,910.5 Z" fill="#52b18d"/><path d="M658,900.5 C656,899.5 654,899 652,899 C650.5,899 650,900.5 650,902 V909.5 C650,911.5 651,913 652.5,913 C654.5,913 656,911.5 658,910.5" fill="none" stroke="rgba(0,0,0,0.4)" stroke-width="0.9"/><rect x="658" y="893" width="69" height="1" fill="rgba(255,255,255,0.2)"/><rect x="658" y="918" width="69" height="1" fill="rgba(0,0,0,0.24)"/><rect x="726" y="893" width="1" height="26" fill="rgba(0,0,0,0.24)"/><rect x="685.5" y="898" width="14" height="16" rx="4" fill="#b8e1d0"/><path d="M668.9000000000001,906.6 C668.7,903.5 670.3000000000001,900.8 673.3000000000001,899.2 L673.7,900.1 C672.1,901.4 671.3000000000001,902.8 671.5,904 C672.9000000000001,904 673.8000000000001,905 673.8000000000001,906.5 A2.5,2.5 0 1 1 668.9000000000001,906.6 Z" fill="#fff"/><path d="M675.2,906.6 C675.0,903.5 676.6,900.8 679.6,899.2 L680.0,900.1 C678.4,901.4 677.6,902.8 677.8,904 C679.2,904 680.1,905 680.1,906.5 A2.5,2.5 0 1 1 675.2,906.6 Z" fill="#fff"/><g transform="rotate(180 710.3 904.3)"><path d="M704.7,906.9 C704.5,903.8 706.1,901.0999999999999 709.1,899.5 L709.5,900.4 C707.9,901.6999999999999 707.1,903.0999999999999 707.3,904.3 C708.7,904.3 709.6,905.3 709.6,906.8 A2.5,2.5 0 1 1 704.7,906.9 Z" fill="#fff"/><path d="M711.2,906.9 C711.0,903.8 712.6,901.0999999999999 715.6,899.5 L716.0,900.4 C714.4,901.6999999999999 713.6,903.0999999999999 713.8,904.3 C715.2,904.3 716.1,905.3 716.1,906.8 A2.5,2.5 0 1 1 711.2,906.9 Z" fill="#fff"/></g><rect x="355" y="924" width="8" height="8" fill="#5382b4"/><path d="M355,930 Q355,924 361,924 H369.5 l6,4 h3.5 l6,-4 H412 V951 H355 Z" fill="#50b071"/><path d="M355.5,930 Q355.5,924.5 361,924.5 H369.5 l6,4 h3.5 l6,-4 H412" fill="none" stroke="rgba(255,255,255,0.2)" stroke-width="1"/><path d="M354.5,930 Q354.5,923.5 361,923.5 H369" fill="none" stroke="rgba(0,0,0,0.3)" stroke-width="1"/><rect x="412" y="924" width="177" height="27" fill="#b8e0e0"/><rect x="412" y="924" width="1" height="27" fill="rgba(255,255,255,0.3)"/><rect x="588" y="924" width="1" height="27" fill="rgba(0,0,0,0.2)"/><rect x="411" y="924" width="1" height="27" fill="rgba(0,0,0,0.2)"/><rect x="355" y="924" width="1" height="27" fill="rgba(255,255,255,0.2)"/><path d="M412,931.5 C410,930.5 408,930 406,930 C404.5,930 404,931.5 404,933 V940.5 C404,942.5 405,944 406.5,944 C408.5,944 410,942.5 412,941.5 Z" fill="#b8e0e0"/><path d="M412,931.5 C410,930.5 408,930 406,930 C404.5,930 404,931.5 404,933 V940.5 C404,942.5 405,944 406.5,944 C408.5,944 410,942.5 412,941.5" fill="none" stroke="rgba(0,0,0,0.4)" stroke-width="0.9"/><text x="365.7" y="941.8" font-family="Liberation Sans" font-size="14.67" fill="#fff">hide</text><g transform="translate(422,929.5)"><path d="M1,4.5 L8,8 V15 L1,11.5 Z" fill="#fff"/><g fill="none" stroke="#fff" stroke-width="1.8" stroke-linejoin="round"><path d="M8,0.9 L15,4.5 V11.5 L8,15 L1,11.5 V4.5 Z"/><path d="M1,4.5 L8,8 L15,4.5 M8,8 V15"/></g></g><rect x="443" y="929" width="139.9" height="16" rx="4.5" fill="#e1f2f2"/><text x="448" y="941.9" font-family="Liberation Sans" font-size="14.67" fill="#000">Virsma 1200x680</text><path d="M569.2,935 H574.7 L572.0,939 Z" fill="#9ed1d1"/><path d="M355,951 H412 V978 H361 Q355,978 355,972 Z" fill="#50b071"/><path d="M355.2,972 Q355.2,978.8 361,978.8 H369.5" fill="none" stroke="rgba(0,0,0,0.7)" stroke-width="1.8"/><path d="M354,972 Q354,980.2 361,980.2 H368" fill="none" stroke="rgba(255,255,255,0.15)" stroke-width="1"/><rect x="412" y="951" width="177" height="27" fill="#b8e0e0"/><rect x="412" y="951" width="1" height="27" fill="rgba(255,255,255,0.3)"/><rect x="588" y="951" width="1" height="27" fill="rgba(0,0,0,0.2)"/><rect x="411" y="951" width="1" height="27" fill="rgba(0,0,0,0.2)"/><rect x="355" y="951" width="1" height="27" fill="rgba(255,255,255,0.2)"/><path d="M412,958.5 C410,957.5 408,957 406,957 C404.5,957 404,958.5 404,960 V967.5 C404,969.5 405,971 406.5,971 C408.5,971 410,969.5 412,968.5 Z" fill="#b8e0e0"/><path d="M412,958.5 C410,957.5 408,957 406,957 C404.5,957 404,958.5 404,960 V967.5 C404,969.5 405,971 406.5,971 C408.5,971 410,969.5 412,968.5" fill="none" stroke="rgba(0,0,0,0.4)" stroke-width="0.9"/><path d="M355,950.5 H369.5 l6,4 h3.5 l6,-4 H589" fill="none" stroke="rgba(0,0,0,0.24)" stroke-width="1"/><path d="M357,951.5 H369.5 l6,4 h3.5 l6,-4 H589" fill="none" stroke="rgba(255,255,255,0.2)" stroke-width="1"/><rect x="355" y="950" width="1.2" height="1.2" fill="rgba(0,0,0,0.6)"/><text x="365.7" y="968.8" font-family="Liberation Sans" font-size="14.67" fill="#fff">hide</text><g transform="translate(422,956.5)"><path d="M1,4.5 L8,8 V15 L1,11.5 Z" fill="#fff"/><g fill="none" stroke="#fff" stroke-width="1.8" stroke-linejoin="round"><path d="M8,0.9 L15,4.5 V11.5 L8,15 L1,11.5 V4.5 Z"/><path d="M1,4.5 L8,8 L15,4.5 M8,8 V15"/></g></g><rect x="443" y="956" width="139.9" height="16" rx="4.5" fill="#e1f2f2"/><text x="448" y="968.9" font-family="Liberation Sans" font-size="14.67" fill="#000">Virsma 1600x800</text><path d="M569.2,962 H574.7 L572.0,966 Z" fill="#9ed1d1"/><path d="M369.5,978 l6,4 h3.5 l6,-4 Z" fill="#50b071"/><path d="M360,978.5 H369.5 l6,4 h3.5 l6,-4 H589" fill="none" stroke="rgba(0,0,0,0.24)" stroke-width="1"/></g></svg>
<div class="a" style="left:924px;top:113px;width:808px;height:583px;background:#474747"></div>
<div class="a" style="left:925px;top:136px;width:806px;height:559px;background:#fff"></div>
<svg style="left:924px;top:113px" width="808" height="583"><defs>
<linearGradient id="btng" x1="0" y1="0" x2="0" y2="1"><stop offset="0" stop-color="#fafafa"/><stop offset="1" stop-color="#d0d0d0"/></linearGradient>
<radialGradient id="shad" cx="0.5" cy="0.5" r="0.5"><stop offset="0" stop-color="#cdcdcd"/><stop offset="0.55" stop-color="#dedede"/><stop offset="1" stop-color="#fff" stop-opacity="0"/></radialGradient><filter id="blur" x="-20%" y="-50%" width="140%" height="200%"><feGaussianBlur stdDeviation="3"/></filter>
</defs><g transform="translate(-924,-113)">
<rect x="930" y="117" width="16" height="14" rx="2" fill="url(#btng)"/>
<rect x="934" y="119.5" width="2.5" height="9" fill="#333"/><rect x="939.5" y="119.5" width="2.5" height="9" fill="#333"/>
<rect x="1710" y="117" width="16" height="14" rx="2" fill="url(#btng)"/>
<path d="M1714.5,120.5 L1721.5,127.5 M1721.5,120.5 L1714.5,127.5" stroke="#333" stroke-width="2.2"/>
<ellipse cx="1318" cy="523" rx="150" ry="17" fill="url(#shad)"/>
<ellipse cx="1318" cy="521" rx="110" ry="9" fill="#cfcfcf" opacity="0.55" filter="url(#blur)"/>
<rect x="1194" y="417" width="238" height="4.5" fill="#d9d9dd"/>
<rect x="1203" y="421" width="48" height="1.2" fill="#9a9ca0"/><rect x="1361" y="421" width="58" height="1.2" fill="#55585c"/>
<g>
<path d="M1229,470 L1232,470 L1228,525 L1225,525 Z" fill="#45484c"/>
<path d="M1208,421 L1217,421 L1204,530 L1195,530 Z" fill="#7f8288"/><path d="M1214.5,421 L1217,421 L1204,530 L1201.5,530 Z" fill="#56595e"/>
<path d="M1223,421 L1233,421 L1221,528 L1212,528 Z" fill="#7f8288"/><path d="M1230.5,421 L1233,421 L1221,528 L1218.5,528 Z" fill="#56595e"/>
<path d="M1236,421 L1247,421 L1234.6,529 L1225.5,529 Z" fill="#7f8288"/><path d="M1244,421 L1247,421 L1234.6,529 L1232,529 Z" fill="#56595e"/>
</g>
<g>
<path d="M1363,421 L1371.4,421 L1379,512.5 L1371.4,512.5 Z" fill="#35383c"/>
<path d="M1374.7,421 L1381.3,421 L1388.8,511 L1381.3,511 Z" fill="#35383c"/>
<path d="M1376,421 L1385.5,421 L1399.6,524 L1392,524 Z" fill="#44474c"/><path d="M1376,421 L1378.5,421 L1394.5,524 L1392,524 Z" fill="#5d6065"/>
<path d="M1387,421 L1395.4,421 L1402,510 L1395.4,510 Z" fill="#35383c"/>
<path d="M1389.6,421 L1397,421 L1412,524 L1404.5,524 Z" fill="#44474c"/><path d="M1389.6,421 L1392,421 L1407,524 L1404.5,524 Z" fill="#5d6065"/>
<path d="M1407,421 L1415.3,421 L1429.4,525 L1422,525 Z" fill="#44474c"/><path d="M1407,421 L1409.5,421 L1424.5,525 L1422,525 Z" fill="#5d6065"/>
</g>
<g fill="#1a1a1a">
<ellipse cx="1199.5" cy="531" rx="4.5" ry="1.6"/><ellipse cx="1216.5" cy="529" rx="4.5" ry="1.6"/><ellipse cx="1230" cy="530" rx="4.5" ry="1.6"/>
<ellipse cx="1375.5" cy="513" rx="3.8" ry="1.4"/><ellipse cx="1385" cy="511.5" rx="3.8" ry="1.4"/><ellipse cx="1398.5" cy="510.5" rx="3" ry="1.2"/>
<ellipse cx="1396" cy="525" rx="4.2" ry="1.5"/><ellipse cx="1408.5" cy="525" rx="4.2" ry="1.5"/><ellipse cx="1426" cy="526" rx="4.2" ry="1.5"/>
</g>
</g></svg>
<div class="a t" style="left:950px;top:116.70px;font-size:13.7px;line-height:13.7px;color:#f2f2f2;">Viewport (FPS: 43)</div>
<div class="a" style="left:1856px;top:161px;width:10px;height:186px;border-radius:5px;background:#4a4a4a"></div>
<div class="a" style="left:731px;top:932px;width:1049px;height:10px;border-radius:5px;background:#484848"></div>
<div class="a" style="left:3px;top:945px;width:1865px;height:47px;background:#282828;border-radius:0 0 8px 8px"></div>
<div class="a" style="left:187px;top:952px;width:1px;height:36px;background:#e0e0e0"></div>
<div class="a" style="left:937px;top:952px;width:1px;height:36px;background:#e0e0e0"></div>
<svg style="left:0;top:945px" width="1870" height="47"><defs>
<linearGradient id="wg" x1="0.2" y1="0" x2="0.8" y2="1"><stop offset="0" stop-color="#ffffff"/><stop offset="1" stop-color="#d6d6d6"/></linearGradient>
<linearGradient id="gg" x1="0.8" y1="0" x2="0.2" y2="1"><stop offset="0" stop-color="#7fcd6a"/><stop offset="1" stop-color="#4fb23a"/></linearGradient>
<linearGradient id="bg" x1="0.8" y1="0" x2="0.2" y2="1"><stop offset="0" stop-color="#7aaef0"/><stop offset="1" stop-color="#4686dc"/></linearGradient>
<linearGradient id="rg" x1="0.2" y1="0" x2="0.8" y2="1"><stop offset="0" stop-color="#7a7a7a"/><stop offset="1" stop-color="#5c5c5c"/></linearGradient>
</defs><g transform="translate(0,-945)">
<circle cx="29" cy="970" r="18" fill="url(#wg)"/>
<circle cx="73" cy="970" r="18" fill="url(#wg)"/>
<circle cx="117" cy="970" r="18" fill="url(#wg)"/>
<circle cx="161" cy="970" r="18" fill="url(#wg)"/>
<circle cx="867" cy="970" r="18" fill="url(#gg)"/>
<circle cx="911" cy="970" r="18" fill="url(#bg)"/>
<circle cx="963" cy="970" r="18" fill="url(#wg)"/>
<circle cx="1007" cy="970" r="18" fill="url(#rg)"/>
<circle cx="1843" cy="970" r="18" fill="url(#wg)"/>
<g fill="#2a2a2a">
<path d="M21,961 Q21,960 22,960 H37.5 V977 L36,978 V979.5 H24 Q21,979.5 21,977 Z"/>
</g>
<rect x="25" y="964.5" width="9" height="1.6" fill="#ccc"/><rect x="25" y="967.2" width="9" height="1.6" fill="#ccc"/>
<path d="M23,976.5 H36 V978 H23 Z" fill="#eee"/>
<rect x="64.5" y="960" width="17.5" height="19.5" rx="2" fill="none" stroke="#2a2a2a" stroke-width="1.8"/>
<path d="M64,966.5 Q67.5,966.5 67.5,970 Q67.5,973.5 64,973.5 Z" fill="#2a2a2a"/>
<path d="M106.5,964 H110.5 L112.5,960.5 H121.5 L123.5,964 H128 V979 H106.5 Z" fill="#2a2a2a"/>
<circle cx="117" cy="971" r="4.8" fill="none" stroke="#eee" stroke-width="1.4"/>
<g fill="none" stroke="#2a2a2a" stroke-width="2.6"><circle cx="161" cy="970" r="8.2"/></g>
<path d="M161,957 V962 M161,978 V983 M148,970 H153 M169,970 H174" stroke="#2a2a2a" stroke-width="2.6" stroke-linecap="round"/>
<circle cx="161" cy="970" r="1.6" fill="#2a2a2a"/>
<path d="M861,960 L877.5,970 L861,980.5 Z" fill="#2a2a2a" stroke="#2a2a2a" stroke-width="2.5" stroke-linejoin="round"/>
<path d="M900.5,961 Q900.5,960 901.5,960 H915 L921,965.5 V979 Q921,980 920,980 H901.5 Q900.5,980 900.5,979 Z" fill="#2a2a2a"/>
<rect x="903.5" y="962.5" width="10.5" height="4.5" rx="1" fill="#6aa2ea"/>
<circle cx="911" cy="973.5" r="3.1" fill="#6aa2ea"/>
<path d="M951.8,967.7 L960.7,960 V965.1 C967,965.1 974,968 973.7,973.5 C973.5,976.5 972,978.5 969.8,979.8 C971,976 969,970.6 960.7,970.6 V975.7 Z" fill="#2a2a2a"/>
<path d="M1018.2,967.7 L1009.3,960 V965.1 C1003,965.1 996,968 996.3,973.5 C996.5,976.5 998,978.5 1000.2,979.8 C999,976 1001,970.6 1009.3,970.6 V975.7 Z" fill="#2a2a2a"/>
<path d="M1837.8,964.8 C1837.8,957.8 1850,957.8 1850,964.5 C1850,968.8 1844.2,969 1844.2,973" fill="none" stroke="#2a2a2a" stroke-width="4.4" stroke-linecap="round"/>
<circle cx="1844.2" cy="978.8" r="2.9" fill="#2a2a2a"/>
</g></svg>
</body></html>
